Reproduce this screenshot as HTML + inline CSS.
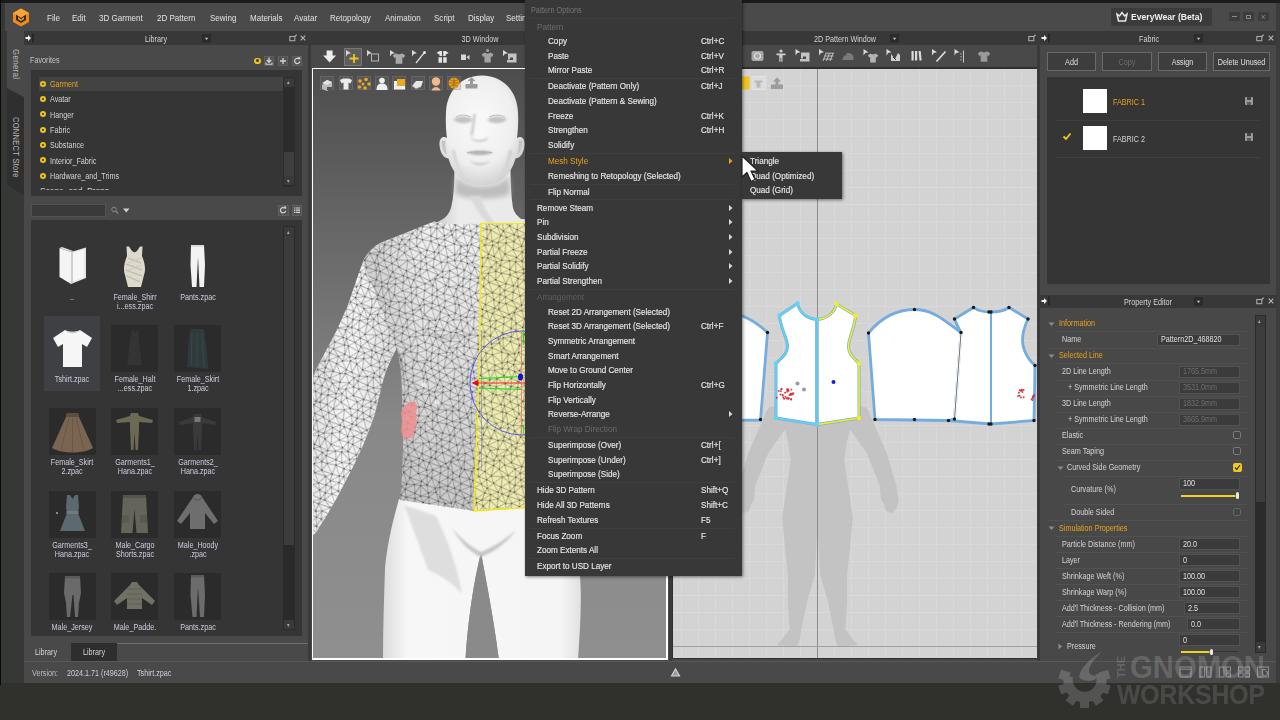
<!DOCTYPE html>
<html lang="en"><head><meta charset="utf-8"><title>Garment UI</title>
<style>
html,body{margin:0;padding:0;width:1280px;height:720px;overflow:hidden;background:#30302d;font-family:"Liberation Sans",sans-serif;font-size:8.4px;color:#d4d4d4}
div,span{position:absolute;box-sizing:border-box}
.t{white-space:nowrap;line-height:10px;height:10px}
.c{text-align:center}
.o{color:#e9a21d}
.g{color:#7a7a7a}
.hd{background:#383838;height:14px}
.pn{background:#494949}
.bx{background:#353535}
.in{background:#3b3b3b;border:1px solid #525252;height:12px}
.sep{height:1px;background:#474747}
.btn{border:1px solid #6a6a6a;background:#3d3d3d;height:19px;line-height:17px;text-align:center}
.th{width:47px;height:47px;background:#2c2c2c}
.cb{width:8px;height:8px;border:1px solid #7a7a7a;border-radius:2px;background:#444}
svg{position:absolute;overflow:hidden}
</style></head>
<body>

<div style="left:0px;top:0px;width:1280px;height:3px;background:#1b1b1b;"></div>
<div style="left:1px;top:3px;width:23px;height:680px;background:#363836;"></div>
<div style="left:0px;top:0px;width:1px;height:685px;background:#0a0a0a;"></div>
<div style="left:5px;top:3px;width:1275px;height:28px;background:#4a4a4a;"></div>
<div style="left:1276px;top:3px;width:4px;height:680px;background:#3c3c3c;"></div>
<svg style="left:12px;top:8px" width="18" height="19" viewBox="0 0 18 19"><polygon points="9,0.5 17,5 17,14 9,18.5 1,14 1,5" fill="#f08a1c"/><polygon points="9,0.5 17,5 9,9.5 1,5" fill="#f8a63a"/><polygon points="4,6.5 9,10 14,6.5 14,12 9,15 4,12" fill="#3a2a18"/><polygon points="6,9 9,11.5 12,9 12,11 9,13 6,11" fill="#f8a63a"/></svg>
<span class="t " style="left:47px;top:12.5px;transform:scaleX(0.96);transform-origin:0 50%;color:#e2e2e2">File</span>
<span class="t " style="left:72px;top:12.5px;transform:scaleX(0.96);transform-origin:0 50%;color:#e2e2e2">Edit</span>
<span class="t " style="left:99px;top:12.5px;transform:scaleX(0.96);transform-origin:0 50%;color:#e2e2e2">3D Garment</span>
<span class="t " style="left:157px;top:12.5px;transform:scaleX(0.96);transform-origin:0 50%;color:#e2e2e2">2D Pattern</span>
<span class="t " style="left:210px;top:12.5px;transform:scaleX(0.96);transform-origin:0 50%;color:#e2e2e2">Sewing</span>
<span class="t " style="left:250px;top:12.5px;transform:scaleX(0.96);transform-origin:0 50%;color:#e2e2e2">Materials</span>
<span class="t " style="left:294px;top:12.5px;transform:scaleX(0.96);transform-origin:0 50%;color:#e2e2e2">Avatar</span>
<span class="t " style="left:330px;top:12.5px;transform:scaleX(0.96);transform-origin:0 50%;color:#e2e2e2">Retopology</span>
<span class="t " style="left:385px;top:12.5px;transform:scaleX(0.96);transform-origin:0 50%;color:#e2e2e2">Animation</span>
<span class="t " style="left:434px;top:12.5px;transform:scaleX(0.96);transform-origin:0 50%;color:#e2e2e2">Script</span>
<span class="t " style="left:468px;top:12.5px;transform:scaleX(0.96);transform-origin:0 50%;color:#e2e2e2">Display</span>
<span class="t " style="left:506px;top:12.5px;transform:scaleX(0.96);transform-origin:0 50%;color:#e2e2e2">Settings</span>
<div style="left:1111px;top:8px;width:101px;height:18px;background:#3b3b3b;border-radius:2px"></div>
<svg style="left:1116px;top:11px" width="12" height="12" viewBox="0 0 12 12"><path d="M1 3 L3.5 5 L6 1.5 L8.5 5 L11 3 L9.5 10 L2.5 10 Z" fill="none" stroke="#e8e8e8" stroke-width="1.5"/></svg>
<span class="t " style="left:1130.5px;top:12.0px;transform:scaleX(0.9);transform-origin:0 50%;font-weight:bold;font-size:9.6px;color:#f0f0f0">EveryWear (Beta)</span>
<div style="left:1229px;top:12px;width:11px;height:9px;background:#3c3c3c;border-radius:1px"></div>
<div style="left:1243px;top:12px;width:11px;height:9px;background:#3c3c3c;border-radius:1px"></div>
<div style="left:1258px;top:12px;width:11px;height:9px;background:#3c3c3c;border-radius:1px"></div>
<div style="left:1232px;top:16px;width:5px;height:1px;background:#8a8a8a;"></div>
<div style="left:1246px;top:15px;width:5px;height:4px;border:1px solid #8a8a8a"></div>
<span class="t " style="left:1261px;top:11.5px;transform:scaleX(0.86);transform-origin:0 50%;color:#8a8a8a;font-size:9px">×</span>
<div style="left:7px;top:31px;width:17px;height:66px;background:#494949;clip-path:polygon(0 0,100% 0,100% 100%,0 86%)"></div>
<div style="left:7px;top:89px;width:17px;height:106px;background:#2f2f2f;clip-path:polygon(0 0,100% 8%,100% 100%,0 90.500%)"></div>
<span class="t" style="left:11px;top:49px;transform-origin:0 0;transform:translate(10px,0) rotate(90deg) scaleX(.95);color:#b8b8b8;letter-spacing:.3px">General</span>
<span class="t" style="left:11px;top:116.5px;transform-origin:0 0;transform:translate(10px,0) rotate(90deg) scaleX(.9);color:#b8b8b8;letter-spacing:.3px">CONNECT Store</span>
<div style="left:24px;top:31px;width:284px;height:630px;background:#494949;"></div>
<div style="left:24px;top:31px;width:284px;height:14px;background:#383838;"></div>
<span class="t c " style="left:96.0px;width:120px;top:33.5px;transform:scaleX(0.86);">Library</span>
<svg style="left:201.5px;top:34.0px" width="9" height="9" viewBox="0 0 9 9"><rect width="9" height="9" rx="1" fill="#2b2b2b"/><path d="M2.800 3.700 h3.400 l-1.700 2.200 z" fill="#c8c8c8"/></svg>
<svg style="left:25px;top:32.5px" width="10" height="10" viewBox="0 0 10 10"><path d="M0.500 4 h2.500 v-2 l3 3 l-3 3 v-2 h-2.500 z" fill="#f2f2f2"/><rect x="7.200" y="0.500" width="1.500" height="9" fill="#242424"/></svg>
<svg style="left:289px;top:33.5px" width="9" height="8" viewBox="0 0 9 8"><rect x="0.800" y="2.500" width="5" height="4.200" fill="none" stroke="#aaaaaa" stroke-width="1.100"/><path d="M5.500 2.800 L7.800 .6" stroke="#aaaaaa" stroke-width="1.200"/></svg>
<svg style="left:300px;top:34.5px" width="6" height="6" viewBox="0 0 6 6"><path d="M.7 .7 L5.300 5.300 M5.300 .7 L.7 5.300" stroke="#b4b4b4" stroke-width="1.200"/></svg>
<span class="t " style="left:30px;top:54.5px;transform:scaleX(0.86);transform-origin:0 50%;color:#c4c4c4">Favorites</span>
<div style="left:254px;top:57.500px;width:6.500px;height:6.500px;border-radius:4px;background:#ecc81c"></div><div style="left:255.800px;top:59.300px;width:3px;height:3px;border-radius:2px;background:#4a3018"></div>
<div style="left:264px;top:55.5px;width:10px;height:10px;background:#535353;border:1px solid #5e5e5e"></div>
<div style="left:278px;top:55.5px;width:10px;height:10px;background:#535353;border:1px solid #5e5e5e"></div>
<div style="left:292px;top:55.5px;width:10px;height:10px;background:#535353;border:1px solid #5e5e5e"></div>
<svg style="left:264px;top:55.500px" width="40" height="10" viewBox="0 0 40 10" fill="none" stroke="#d4d4d4"><path d="M5 1.500 v4.500 M2.800 4 l2.200 2.400 l2.200 -2.400" stroke-width="1.300"/><path d="M2 6.500 v1.800 h6 v-1.800" stroke-width="1.100"/><path d="M19 2 v6 M16 5 h6" stroke-width="1.300"/><path d="M35 3 a2.600 2.600 0 1 0 .8 2.500" stroke-width="1.200"/><path d="M33.500 1.200 h2.800 v2.800 z" fill="#d4d4d4" stroke="none"/></svg>
<div style="left:31px;top:70px;width:271px;height:126px;background:#353535;"></div>
<div style="left:39px;top:77px;width:244px;height:14px;background:#434343;"></div>
<div style="left:40px;top:80.5px;width:6px;height:6px;border-radius:3px;background:#ecc41c"></div><div style="left:42px;top:82.5px;width:2px;height:2px;border-radius:1px;background:#3a3010"></div>
<span class="t o" style="left:49.5px;top:79.0px;transform:scaleX(0.86);transform-origin:0 50%;">Garment</span>
<div style="left:40px;top:95.8px;width:6px;height:6px;border-radius:3px;background:#ecc41c"></div><div style="left:42px;top:97.8px;width:2px;height:2px;border-radius:1px;background:#3a3010"></div>
<span class="t " style="left:49.5px;top:94.3px;transform:scaleX(0.86);transform-origin:0 50%;">Avatar</span>
<div style="left:40px;top:111.2px;width:6px;height:6px;border-radius:3px;background:#ecc41c"></div><div style="left:42px;top:113.2px;width:2px;height:2px;border-radius:1px;background:#3a3010"></div>
<span class="t " style="left:49.5px;top:109.7px;transform:scaleX(0.86);transform-origin:0 50%;">Hanger</span>
<div style="left:40px;top:126.6px;width:6px;height:6px;border-radius:3px;background:#ecc41c"></div><div style="left:42px;top:128.6px;width:2px;height:2px;border-radius:1px;background:#3a3010"></div>
<span class="t " style="left:49.5px;top:125.1px;transform:scaleX(0.86);transform-origin:0 50%;">Fabric</span>
<div style="left:40px;top:141.9px;width:6px;height:6px;border-radius:3px;background:#ecc41c"></div><div style="left:42px;top:143.9px;width:2px;height:2px;border-radius:1px;background:#3a3010"></div>
<span class="t " style="left:49.5px;top:140.4px;transform:scaleX(0.86);transform-origin:0 50%;">Substance</span>
<div style="left:40px;top:157.2px;width:6px;height:6px;border-radius:3px;background:#ecc41c"></div><div style="left:42px;top:159.2px;width:2px;height:2px;border-radius:1px;background:#3a3010"></div>
<span class="t " style="left:49.5px;top:155.8px;transform:scaleX(0.86);transform-origin:0 50%;">Interior_Fabric</span>
<div style="left:40px;top:172.6px;width:6px;height:6px;border-radius:3px;background:#ecc41c"></div><div style="left:42px;top:174.6px;width:2px;height:2px;border-radius:1px;background:#3a3010"></div>
<span class="t " style="left:49.5px;top:171.1px;transform:scaleX(0.86);transform-origin:0 50%;">Hardware_and_Trims</span>
<div style="left:40px;top:186px;width:80px;height:4px;overflow:hidden"><span class="t" style="left:0;top:0px">Scene_and_Props</span></div>
<div style="left:283px;top:77px;width:12px;height:110px;background:#2c2c2c;"></div>
<div style="left:284px;top:78px;width:10px;height:9px;background:#3a3a3a;"></div>
<div style="left:284px;top:176px;width:10px;height:9px;background:#3a3a3a;"></div>
<div style="left:284px;top:152px;width:10px;height:24px;background:#3e3e3e;"></div>
<span class="t " style="left:286.5px;top:77.0px;transform:scaleX(0.86);transform-origin:0 50%;font-size:6px;color:#aaa">▴</span>
<span class="t " style="left:286.5px;top:176.0px;transform:scaleX(0.86);transform-origin:0 50%;font-size:6px;color:#aaa">▾</span>
<div style="left:31px;top:204px;width:75px;height:13px;background:#3a3a3a;border:1px solid #525252"></div>
<svg style="left:110px;top:205px" width="22" height="11" viewBox="0 0 22 11"><circle cx="4" cy="4.500" r="2.300" fill="none" stroke="#8a8a8a" stroke-width="1"/><path d="M5.800 6.300 L8 8.500" stroke="#8a8a8a" stroke-width="1.200"/><path d="M13 3.500 h6.500 l-3.250 4 z" fill="#d0d0d0"/></svg>
<div style="left:278px;top:205px;width:10.5px;height:10.5px;background:#535353;border:1px solid #5e5e5e"></div>
<div style="left:291.5px;top:205px;width:10.5px;height:10.5px;background:#535353;border:1px solid #5e5e5e"></div>
<svg style="left:278px;top:205px" width="25" height="11" viewBox="0 0 25 11" fill="none" stroke="#d4d4d4"><path d="M6.800 3.300 a2.600 2.600 0 1 0 .8 2.500" stroke-width="1.200"/><path d="M5.300 1.500 h2.800 v2.800 z" fill="#d4d4d4" stroke="none"/><path d="M16 3 h6 M16 5.200 h6 M16 7.400 h6" stroke-width="1.200" stroke-dasharray="1.200 .6 6 0"/></svg>
<div style="left:31px;top:220px;width:271px;height:416px;background:#353535;"></div>
<div style="left:283px;top:226px;width:12px;height:404px;background:#2a2a2a;"></div>
<div style="left:284px;top:227px;width:10px;height:10px;background:#3a3a3a;"></div>
<div style="left:284px;top:237px;width:10px;height:308px;background:#3c3c3c;"></div>
<div style="left:284px;top:620px;width:10px;height:9px;background:#3a3a3a;"></div>
<span class="t " style="left:286.5px;top:227.0px;transform:scaleX(0.86);transform-origin:0 50%;font-size:6px;color:#aaa">▴</span>
<span class="t " style="left:286.5px;top:620.0px;transform:scaleX(0.86);transform-origin:0 50%;font-size:6px;color:#aaa">▾</span>
<div style="left:44px;top:316px;width:56px;height:75px;background:#3e4043;"></div>
<span class="t c " style="left:37.0px;width:70px;top:291.5px;transform:scaleX(0.86);color:#cdcde0">..</span>
<span class="t c " style="left:99.5px;width:70px;top:291.5px;transform:scaleX(0.86);color:#cdcde0">Female_Shirr</span>
<span class="t c " style="left:99.5px;width:70px;top:300.7px;transform:scaleX(0.86);color:#cdcde0">i...ess.zpac</span>
<span class="t c " style="left:162.5px;width:70px;top:291.5px;transform:scaleX(0.86);color:#cdcde0">Pants.zpac</span>
<span class="t c " style="left:37.0px;width:70px;top:374.0px;transform:scaleX(0.86);color:#cdcde0">Tshirt.zpac</span>
<div style="left:111.0px;top:325px;width:47px;height:47px;background:#2b2b2b;"></div>
<span class="t c " style="left:99.5px;width:70px;top:374.0px;transform:scaleX(0.86);color:#cdcde0">Female_Halt</span>
<span class="t c " style="left:99.5px;width:70px;top:383.2px;transform:scaleX(0.86);color:#cdcde0">...ess.zpac</span>
<div style="left:174.0px;top:325px;width:47px;height:47px;background:#2b2b2b;"></div>
<span class="t c " style="left:162.5px;width:70px;top:374.0px;transform:scaleX(0.86);color:#cdcde0">Female_Skirt</span>
<span class="t c " style="left:162.5px;width:70px;top:383.2px;transform:scaleX(0.86);color:#cdcde0">1.zpac</span>
<div style="left:48.5px;top:407.5px;width:47px;height:47px;background:#2b2b2b;"></div>
<span class="t c " style="left:37.0px;width:70px;top:456.5px;transform:scaleX(0.86);color:#cdcde0">Female_Skirt</span>
<span class="t c " style="left:37.0px;width:70px;top:465.7px;transform:scaleX(0.86);color:#cdcde0">2.zpac</span>
<div style="left:111.0px;top:407.5px;width:47px;height:47px;background:#2b2b2b;"></div>
<span class="t c " style="left:99.5px;width:70px;top:456.5px;transform:scaleX(0.86);color:#cdcde0">Garments1_</span>
<span class="t c " style="left:99.5px;width:70px;top:465.7px;transform:scaleX(0.86);color:#cdcde0">Hana.zpac</span>
<div style="left:174.0px;top:407.5px;width:47px;height:47px;background:#2b2b2b;"></div>
<span class="t c " style="left:162.5px;width:70px;top:456.5px;transform:scaleX(0.86);color:#cdcde0">Garments2_</span>
<span class="t c " style="left:162.5px;width:70px;top:465.7px;transform:scaleX(0.86);color:#cdcde0">Hana.zpac</span>
<div style="left:48.5px;top:490.5px;width:47px;height:47px;background:#2b2b2b;"></div>
<span class="t c " style="left:37.0px;width:70px;top:539.5px;transform:scaleX(0.86);color:#cdcde0">Garments3_</span>
<span class="t c " style="left:37.0px;width:70px;top:548.7px;transform:scaleX(0.86);color:#cdcde0">Hana.zpac</span>
<div style="left:111.0px;top:490.5px;width:47px;height:47px;background:#2b2b2b;"></div>
<span class="t c " style="left:99.5px;width:70px;top:539.5px;transform:scaleX(0.86);color:#cdcde0">Male_Cargo</span>
<span class="t c " style="left:99.5px;width:70px;top:548.7px;transform:scaleX(0.86);color:#cdcde0">Shorts.zpac</span>
<div style="left:174.0px;top:490.5px;width:47px;height:47px;background:#2b2b2b;"></div>
<span class="t c " style="left:162.5px;width:70px;top:539.5px;transform:scaleX(0.86);color:#cdcde0">Male_Hoody</span>
<span class="t c " style="left:162.5px;width:70px;top:548.7px;transform:scaleX(0.86);color:#cdcde0">.zpac</span>
<div style="left:48.5px;top:573px;width:47px;height:47px;background:#2b2b2b;"></div>
<span class="t c " style="left:37.0px;width:70px;top:622.0px;transform:scaleX(0.86);color:#cdcde0">Male_Jersey</span>
<div style="left:111.0px;top:573px;width:47px;height:47px;background:#2b2b2b;"></div>
<span class="t c " style="left:99.5px;width:70px;top:622.0px;transform:scaleX(0.86);color:#cdcde0">Male_Padde.</span>
<div style="left:174.0px;top:573px;width:47px;height:47px;background:#2b2b2b;"></div>
<span class="t c " style="left:162.5px;width:70px;top:622.0px;transform:scaleX(0.86);color:#cdcde0">Pants.zpac</span>
<svg style="left:48.5px;top:242.5px" width="47" height="47" viewBox="0 0 47 47"><path d="M10.500 5 L22 9 L22 41 L10.500 34 Z" fill="#f4f4f4"/><path d="M22 9 L37 4.500 L37 35 L22 41 Z" fill="#e6e6e6"/><path d="M24 10 L35 6.500 L35 34 L24 38.500 Z" fill="#f7f7f7"/><path d="M22 9 L24 8 L24 39 L22 41Z" fill="#cfcfcf"/><path d="M10.500 5 L13 4 L24 8 L22 9Z" fill="#dcdcdc"/></svg>
<svg style="left:111.0px;top:242.5px" width="47" height="47" viewBox="0 0 47 47"><path d="M15.500 3.500 L18 3.500 L21 8 L23.500 9.500 L26 8 L29 3.500 L31.500 3.500 L31 13 C34 20 35 27 33 32 L30 44 L17 44 L14 32 C12 27 13 20 16 13 Z" fill="#ddd9cc"/><path d="M17 15 L30 20 M15 21 L31 27 M14.500 27 L31 33 M16 33 L29 39" stroke="#bdb8a8" stroke-width="1.100"/><path d="M30 15 L17 20 M31 22 L16 28" stroke="#c9c4b5" stroke-width=".8"/></svg>
<svg style="left:174.0px;top:242.5px" width="47" height="47" viewBox="0 0 47 47"><path d="M17 2 H30 L31 22 L30 44 H25.500 L24 14 L22.500 44 H18 L16.500 22 Z" fill="#f3f3f3"/><path d="M17 2 H30 V4 H17Z" fill="#dcdcdc"/></svg>
<svg style="left:48.5px;top:325px" width="47" height="47" viewBox="0 0 47 47"><path d="M16 5 C20 8 27 8 31 5 L43 13 L38 22 L33 19 L33 42 L14 42 L14 19 L9 22 L4 13 Z" fill="#f6f6f6"/><path d="M16 5 C20 9.500 27 9.500 31 5 C27 7 20 7 16 5Z" fill="#cfcfcf"/></svg>
<svg style="left:111.0px;top:325px" width="47" height="47" viewBox="0 0 47 47"><path d="M21 5 L23 5 L23.500 9 L26 5 L27 5 L28 16 L31 40 L16 40 L19 16 Z" fill="#343434"/></svg>
<svg style="left:174.0px;top:325px" width="47" height="47" viewBox="0 0 47 47"><path d="M16 4 H30 L33 28 L34 44 L13 42 L14 26 Z" fill="#2f3a3c"/><path d="M18 8 L17 40 M23 8 L23 42 M28 8 L30 42" stroke="#3b4749" stroke-width="1"/></svg>
<svg style="left:48.5px;top:407.5px" width="47" height="47" viewBox="0 0 47 47"><path d="M18 5 H29 L30 9 L44 40 C34 46 13 46 3 40 L17 9 Z" fill="#7a6552"/><path d="M18 5 H29 L30 9 H17Z" fill="#5e4d3e"/><path d="M20 10 L12 42 M27 10 L35 42 M23.500 10 L23.500 44" stroke="#6a5746" stroke-width="1"/></svg>
<svg style="left:111.0px;top:407.5px" width="47" height="47" viewBox="0 0 47 47"><path d="M20 5 H27 L28 8 L42 12 L41 15 L28 14 L28 20 L27 42 H24.500 L23.500 24 L22.500 42 H20 L19 20 L19 14 L6 15 L5 12 L19 8 Z" fill="#6c6a55"/></svg>
<svg style="left:174.0px;top:407.5px" width="47" height="47" viewBox="0 0 47 47"><path d="M20 6 H27 L28 9 L42 14 L41 17 L28 15 L28 22 L27 42 H24.500 L23.500 25 L22.500 42 H20 L19 22 L19 15 L6 17 L5 14 L19 9 Z" fill="#3a3a3c"/><rect x="20.500" y="9" width="6" height="5" fill="#777"/></svg>
<svg style="left:48.5px;top:490.5px" width="47" height="47" viewBox="0 0 47 47"><path d="M18 4 L21 4 L23.500 8 L26 4 L29 4 L30 16 L29 22 L36 40 L11 40 L18 22 L17 16 Z" fill="#5a6a70"/><path d="M17.500 20 H29.500 V23 H17.500Z" fill="#6e7c80"/><circle cx="8" cy="22" r="1" fill="#aaa"/></svg>
<svg style="left:111.0px;top:490.5px" width="47" height="47" viewBox="0 0 47 47"><path d="M12 4 H35 L37 42 H25.500 L23.500 18 L21.500 42 H10 Z" fill="#64645a"/><path d="M12 4 H35 V7 H12Z" fill="#55554c"/><path d="M11 24 H18 V32 H11Z M29 24 H36 V32 H29Z" fill="#5a5a50"/></svg>
<svg style="left:174.0px;top:490.5px" width="47" height="47" viewBox="0 0 47 47"><path d="M19 6 C20 2 27 2 28 6 L32 12 L44 30 L40 33 L31 22 L31 38 H16 L16 22 L7 33 L3 30 L15 12 Z" fill="#6e6e6e"/><path d="M19 6 C21 10 26 10 28 6" stroke="#555" fill="none"/></svg>
<svg style="left:48.5px;top:573px" width="47" height="47" viewBox="0 0 47 47"><path d="M16 3 H31 L32 20 L30 30 L29 44 H26 L24.500 22 L23.500 22 L21 44 H18 L17 30 L15 20 Z" fill="#6a6a6a"/><path d="M16 3 H31 V5.500 H16Z" fill="#5a5a5a"/></svg>
<svg style="left:111.0px;top:573px" width="47" height="47" viewBox="0 0 47 47"><path d="M19 12 L21 9 H26 L28 12 L44 28 L41 32 L31 25 L31 36 H16 L16 25 L6 32 L3 28 Z" fill="#707064"/><path d="M16 16 H31 M16 21 H31 M16 26 H31 M16 31 H31" stroke="#5c5c52" stroke-width=".8"/></svg>
<svg style="left:174.0px;top:573px" width="47" height="47" viewBox="0 0 47 47"><path d="M17 2 H30 L31 22 L30 44 H26 L24 14 L22.500 44 H18.500 L16.500 22 Z" fill="#6c6c6c"/><path d="M17 2 H30 V4.500 H17Z" fill="#5a5a5a"/></svg>
<div style="left:117px;top:643px;width:191px;height:1px;background:#6e6e6e;"></div>
<div style="left:71px;top:643px;width:46px;height:18px;background:#2e2e2e;"></div>
<span class="t c " style="left:23.0px;width:46px;top:646.5px;transform:scaleX(0.86);">Library</span>
<span class="t c " style="left:70.5px;width:46px;top:646.5px;transform:scaleX(0.86);">Library</span>
<div style="left:24px;top:661px;width:1252px;height:22px;background:#494949;"></div>
<div style="left:24px;top:661px;width:1252px;height:1px;background:#585858;"></div>
<span class="t " style="left:31.5px;top:667.5px;transform:scaleX(0.86);transform-origin:0 50%;color:#bdbdbd">Version:</span>
<span class="t " style="left:66.5px;top:667.5px;transform:scaleX(0.86);transform-origin:0 50%;color:#cfcfd4">2024.1.71 (r49628)</span>
<span class="t " style="left:136.5px;top:667.5px;transform:scaleX(0.86);transform-origin:0 50%;color:#cfcfd4">Tshirt.zpac</span>
<svg style="left:670px;top:667px" width="12" height="11" viewBox="0 0 12 11"><path d="M1.500 9 L5.500 2 L9.500 9 Z" fill="#9a9a9a" stroke="#d0d0d0" stroke-width="1.200"/></svg>
<div style="left:308px;top:31px;width:3px;height:630px;background:#3a3a3a;"></div>
<div style="left:311px;top:31px;width:358px;height:630px;background:#484848;"></div>
<div style="left:311px;top:31px;width:358px;height:14px;background:#383838;"></div>
<span class="t c " style="left:420.0px;width:120px;top:33.5px;transform:scaleX(0.86);">3D Window</span>
<div style="left:669px;top:31px;width:3px;height:630px;background:#3a3a3a;"></div>
<div style="left:311px;top:45px;width:358px;height:22.500px;background:#494949"></div>
<div style="left:343.500px;top:47.500px;width:18px;height:18px;background:#5d5d5d;border:1px solid #787878"></div>
<svg style="left:311px;top:45px" width="215" height="23" viewBox="311 45 215 23">
<path d="M326.600 50.5 h6 v5 h3.500 l-6.500 7 l-6.500 -7 h3.500 z" fill="#ededed"/>
<path d="M346 50 l5 3.200 l-3.200 .8 l-1.800 2.600 z" fill="#d8d8d8"/><path d="M349.500 58.5 h9 M354 54 v9" stroke="#f0c81e" stroke-width="1.800"/>
<path d="M367 50 l5 3.200 l-3.200 .8 l-1.800 2.600 z" fill="#d8d8d8"/><rect x="371.500" y="54" width="7" height="7" fill="none" stroke="#b8b8b8" stroke-width="1"/>
<path d="M390 50 l5 3.200 l-3.200 .8 l-1.800 2.600 z" fill="#d8d8d8"/><path transform="translate(399,58.5) scale(0.95)" d="M-3 -5.500 L-6.500 -3.500 L-5 -.5 L-3.500 -1.200 L-3.500 5.500 L3.500 5.500 L3.500 -1.200 L5 -.5 L6.500 -3.500 L3 -5.500 C2 -4 -2 -4 -3 -5.500 Z" fill="#a9a9a9"/>
<path d="M412 50 l5 3.200 l-3.200 .8 l-1.800 2.600 z" fill="#d8d8d8"/><path d="M416 63 L424 53" stroke="#d8d8d8" stroke-width="1.300"/><circle cx="424.500" cy="52.5" r="1.500" fill="#e8e8e8"/>
<path d="M436.500 53 l3 -2 h2.500 v5 h-2.500 v-1.500 z M448.700 53 l-3 -2 h-2.500 v5 h2.500 v-1.500 z M438.500 57.2 h3.500 v5.500 h-3.500 z M443.200 57.2 h3.500 v5.500 h-3.500 z" fill="#e4e4e4"/>
<path d="M461 54.5 h5 v5.500 h-5 z M466.500 57.2 l3 -2.500 v5 z" fill="#d8d8d8"/>
<path transform="translate(487.6,57.5) scale(0.9)" d="M-3 -5.500 L-6.500 -3.500 L-5 -.5 L-3.500 -1.200 L-3.500 5.500 L3.500 5.500 L3.500 -1.200 L5 -.5 L6.500 -3.500 L3 -5.500 C2 -4 -2 -4 -3 -5.500 Z" fill="#a4a4a4"/><circle cx="487.600" cy="50.5" r="1.500" fill="#a4a4a4"/>
<path d="M503 50 l5 3.200 l-3.200 .8 l-1.800 2.600 z" fill="#d8d8d8"/><path d="M508 53.5 h8.500 v9 h-9.500 v-2.500 h6 v-2.500 h-3 v2 h-2 z" fill="#c4c4c4"/>
</svg>
<div style="left:311.500px;top:67.500px;width:356.500px;height:592.500px;background:#ffffff"></div>
<svg style="left:313px;top:69px" width="353" height="589" viewBox="313 69 353 589">
<defs>
<pattern id="mesh" width="85.80" height="81.06" patternUnits="userSpaceOnUse" patternTransform="rotate(23)"><path d="M-1.3 -3.7L0.8 1.3M-4.3 0.8L0.8 1.3M-5.1 5.7L7.1 7.6M-5.1 5.7L1.0 14.9M-4.9 12.5L1.0 14.9M-1.8 21.6L3.3 21.3M-1.8 21.6L1.7 29.3M-7.8 29.3L1.7 29.3M-5.4 33.2L2.8 33.9M-1.2 47.1L5.9 46.2M-1.2 47.1L3.5 57.1M-8.6 53.0L3.5 57.1M-2.2 61.6L5.7 62.3M-2.2 61.6L-0.8 66.4M-6.1 69.2L-0.8 66.4M-1.3 77.3L5.0 73.3M5.0 -7.7L0.8 1.3M5.0 -7.7L7.2 -0.2M0.8 1.3L7.2 -0.2M0.8 1.3L-5.1 5.7M0.8 1.3L7.1 7.6M7.1 7.6L10.3 7.6M7.1 7.6L1.0 14.9M7.1 7.6L8.5 16.0M1.0 14.9L8.5 16.0M1.0 14.9L-1.8 21.6M1.0 14.9L3.3 21.3M3.3 21.3L12.8 21.9M3.3 21.3L1.7 29.3M3.3 21.3L8.8 28.7M1.7 29.3L8.8 28.7M1.7 29.3L-5.4 33.2M1.7 29.3L2.8 33.9M2.8 33.9L12.5 33.8M2.8 33.9L-1.1 42.9M2.8 33.9L11.4 43.7M-1.1 42.9L11.4 43.7M-1.1 42.9L5.9 46.2M5.9 46.2L14.5 49.2M5.9 46.2L3.5 57.1M5.9 46.2L7.8 53.8M3.5 57.1L7.8 53.8M3.5 57.1L-2.2 61.6M3.5 57.1L5.7 62.3M5.7 62.3L11.6 59.9M5.7 62.3L-0.8 66.4M5.7 62.3L10.2 68.1M-0.8 66.4L10.2 68.1M-0.8 66.4L-1.3 77.3M-0.8 66.4L5.0 73.3M5.0 73.3L14.5 74.8M5.0 73.3L0.8 82.3M5.0 73.3L7.2 80.9M0.8 82.3L7.2 80.9M14.5 -6.3L7.2 -0.2M14.5 -6.3L19.0 2.5M7.2 -0.2L19.0 2.5M7.2 -0.2L7.1 7.6M7.2 -0.2L10.3 7.6M10.3 7.6L17.9 6.5M10.3 7.6L8.5 16.0M10.3 7.6L18.7 14.4M8.5 16.0L18.7 14.4M8.5 16.0L3.3 21.3M8.5 16.0L12.8 21.9M12.8 21.9L23.0 20.8M12.8 21.9L8.8 28.7M12.8 21.9L14.4 28.6M8.8 28.7L14.4 28.6M8.8 28.7L2.8 33.9M8.8 28.7L12.5 33.8M12.5 33.8L21.9 33.7M12.5 33.8L11.4 43.7M12.5 33.8L14.5 40.8M11.4 43.7L14.5 40.8M11.4 43.7L5.9 46.2M11.4 43.7L14.5 49.2M14.5 49.2L22.9 49.4M14.5 49.2L7.8 53.8M14.5 49.2L14.6 53.9M7.8 53.8L14.6 53.9M7.8 53.8L5.7 62.3M7.8 53.8L11.6 59.9M11.6 59.9L18.4 59.8M11.6 59.9L10.2 68.1M11.6 59.9L18.1 67.1M10.2 68.1L18.1 67.1M10.2 68.1L5.0 73.3M10.2 68.1L14.5 74.8M14.5 74.8L20.8 75.1M14.5 74.8L7.2 80.9M14.5 74.8L19.0 83.6M7.2 80.9L19.0 83.6M7.2 80.9L7.1 88.7M7.2 80.9L10.3 88.7M20.8 -6.0L19.0 2.5M20.8 -6.0L22.8 2.0M19.0 2.5L22.8 2.0M19.0 2.5L10.3 7.6M19.0 2.5L17.9 6.5M17.9 6.5L26.4 8.4M17.9 6.5L18.7 14.4M17.9 6.5L22.4 14.2M18.7 14.4L22.4 14.2M18.7 14.4L12.8 21.9M18.7 14.4L23.0 20.8M23.0 20.8L26.8 20.2M23.0 20.8L14.4 28.6M23.0 20.8L26.8 29.4M14.4 28.6L26.8 29.4M14.4 28.6L12.5 33.8M14.4 28.6L21.9 33.7M21.9 33.7L27.3 36.5M21.9 33.7L14.5 40.8M21.9 33.7L22.9 41.1M14.5 40.8L22.9 41.1M14.5 40.8L14.5 49.2M14.5 40.8L22.9 49.4M22.9 49.4L30.1 48.9M22.9 49.4L14.6 53.9M22.9 49.4L22.3 57.2M14.6 53.9L22.3 57.2M14.6 53.9L11.6 59.9M14.6 53.9L18.4 59.8M18.4 59.8L26.8 60.7M18.4 59.8L18.1 67.1M18.4 59.8L25.8 67.8M18.1 67.1L25.8 67.8M18.1 67.1L14.5 74.8M18.1 67.1L20.8 75.1M20.8 75.1L27.3 73.4M20.8 75.1L19.0 83.6M20.8 75.1L22.8 83.1M27.3 -7.7L22.8 2.0M27.3 -7.7L30.1 1.4M22.8 2.0L30.1 1.4M22.8 2.0L17.9 6.5M22.8 2.0L26.4 8.4M26.4 8.4L34.8 8.2M26.4 8.4L22.4 14.2M26.4 8.4L31.5 14.3M22.4 14.2L31.5 14.3M22.4 14.2L23.0 20.8M22.4 14.2L26.8 20.2M26.8 20.2L38.5 21.2M26.8 20.2L26.8 29.4M26.8 20.2L32.6 29.7M26.8 29.4L32.6 29.7M26.8 29.4L21.9 33.7M26.8 29.4L27.3 36.5M27.3 36.5L34.5 33.2M27.3 36.5L22.9 41.1M27.3 36.5L34.3 42.9M22.9 41.1L34.3 42.9M22.9 41.1L22.9 49.4M22.9 41.1L30.1 48.9M30.1 48.9L34.8 46.9M30.1 48.9L22.3 57.2M30.1 48.9L33.4 57.0M22.3 57.2L33.4 57.0M22.3 57.2L18.4 59.8M22.3 57.2L26.8 60.7M26.8 60.7L34.5 63.8M26.8 60.7L25.8 67.8M26.8 60.7L34.2 69.0M25.8 67.8L34.2 69.0M25.8 67.8L20.8 75.1M25.8 67.8L27.3 73.4M27.3 73.4L35.7 73.5M27.3 73.4L22.8 83.1M27.3 73.4L30.1 82.4M35.7 -7.5L30.1 1.4M35.7 -7.5L37.6 3.1M30.1 1.4L37.6 3.1M30.1 1.4L26.4 8.4M30.1 1.4L34.8 8.2M34.8 8.2L42.6 8.7M34.8 8.2L31.5 14.3M34.8 8.2L38.7 16.0M31.5 14.3L38.7 16.0M31.5 14.3L26.8 20.2M31.5 14.3L38.5 21.2M38.5 21.2L44.4 20.3M38.5 21.2L32.6 29.7M38.5 21.2L38.3 29.0M32.6 29.7L38.3 29.0M32.6 29.7L27.3 36.5M32.6 29.7L34.5 33.2M34.5 33.2L41.7 33.6M34.5 33.2L34.3 42.9M34.5 33.2L40.3 43.1M34.3 42.9L40.3 43.1M34.3 42.9L30.1 48.9M34.3 42.9L34.8 46.9M34.8 46.9L44.5 47.3M34.8 46.9L33.4 57.0M34.8 46.9L42.1 53.7M33.4 57.0L42.1 53.7M33.4 57.0L26.8 60.7M33.4 57.0L34.5 63.8M34.5 63.8L41.4 60.8M34.5 63.8L34.2 69.0M34.5 63.8L39.7 66.6M34.2 69.0L39.7 66.6M34.2 69.0L27.3 73.4M34.2 69.0L35.7 73.5M35.7 73.5L42.2 74.7M35.7 73.5L30.1 82.4M35.7 73.5L37.6 84.1M42.2 -6.3L37.6 3.1M42.2 -6.3L48.2 -0.6M37.6 3.1L48.2 -0.6M37.6 3.1L34.8 8.2M37.6 3.1L42.6 8.7M42.6 8.7L51.0 9.5M42.6 8.7L38.7 16.0M42.6 8.7L50.3 15.2M38.7 16.0L50.3 15.2M38.7 16.0L38.5 21.2M38.7 16.0L44.4 20.3M44.4 20.3L52.7 21.6M44.4 20.3L38.3 29.0M44.4 20.3L45.9 25.9M38.3 29.0L45.9 25.9M38.3 29.0L34.5 33.2M38.3 29.0L41.7 33.6M41.7 33.6L49.2 36.6M41.7 33.6L40.3 43.1M41.7 33.6L48.8 43.6M40.3 43.1L48.8 43.6M40.3 43.1L34.8 46.9M40.3 43.1L44.5 47.3M44.5 47.3L49.2 48.9M44.5 47.3L42.1 53.7M44.5 47.3L47.7 56.1M42.1 53.7L47.7 56.1M42.1 53.7L34.5 63.8M42.1 53.7L41.4 60.8M41.4 60.8L50.8 64.0M41.4 60.8L39.7 66.6M41.4 60.8L45.6 68.8M39.7 66.6L45.6 68.8M39.7 66.6L35.7 73.5M39.7 66.6L42.2 74.7M42.2 74.7L52.9 77.1M42.2 74.7L37.6 84.1M42.2 74.7L48.2 80.4M37.6 84.1L48.2 80.4M52.9 -4.0L48.2 -0.6M52.9 -4.0L56.8 1.9M48.2 -0.6L56.8 1.9M48.2 -0.6L42.6 8.7M48.2 -0.6L51.0 9.5M51.0 9.5L61.0 9.6M51.0 9.5L50.3 15.2M51.0 9.5L54.8 15.3M50.3 15.2L54.8 15.3M50.3 15.2L44.4 20.3M50.3 15.2L52.7 21.6M52.7 21.6L61.6 22.9M52.7 21.6L45.9 25.9M52.7 21.6L55.2 29.3M45.9 25.9L55.2 29.3M45.9 25.9L41.7 33.6M45.9 25.9L49.2 36.6M49.2 36.6L61.4 35.1M49.2 36.6L48.8 43.6M49.2 36.6L56.2 41.0M48.8 43.6L56.2 41.0M48.8 43.6L44.5 47.3M48.8 43.6L49.2 48.9M49.2 48.9L59.9 48.8M49.2 48.9L47.7 56.1M49.2 48.9L53.4 55.7M47.7 56.1L53.4 55.7M47.7 56.1L41.4 60.8M47.7 56.1L50.8 64.0M50.8 64.0L62.0 63.5M50.8 64.0L45.6 68.8M50.8 64.0L56.8 68.1M45.6 68.8L56.8 68.1M45.6 68.8L42.2 74.7M45.6 68.8L52.9 77.1M52.9 77.1L60.7 75.7M52.9 77.1L48.2 80.4M52.9 77.1L56.8 83.0M48.2 80.4L56.8 83.0M48.2 80.4L42.6 89.7M48.2 80.4L51.0 90.6M60.7 -5.4L56.8 1.9M60.7 -5.4L63.1 2.5M56.8 1.9L63.1 2.5M56.8 1.9L51.0 9.5M56.8 1.9L61.0 9.6M61.0 9.6L65.2 8.9M61.0 9.6L54.8 15.3M61.0 9.6L61.0 15.0M54.8 15.3L61.0 15.0M54.8 15.3L52.7 21.6M54.8 15.3L61.6 22.9M61.6 22.9L67.2 20.1M61.6 22.9L55.2 29.3M61.6 22.9L64.4 28.0M55.2 29.3L64.4 28.0M55.2 29.3L49.2 36.6M55.2 29.3L61.4 35.1M61.4 35.1L67.9 36.6M61.4 35.1L56.2 41.0M61.4 35.1L62.1 39.4M56.2 41.0L62.1 39.4M56.2 41.0L49.2 48.9M56.2 41.0L59.9 48.8M59.9 48.8L66.3 49.1M59.9 48.8L53.4 55.7M59.9 48.8L61.9 53.6M53.4 55.7L61.9 53.6M53.4 55.7L50.8 64.0M53.4 55.7L62.0 63.5M62.0 63.5L69.4 62.5M62.0 63.5L56.8 68.1M62.0 63.5L63.1 70.3M56.8 68.1L63.1 70.3M56.8 68.1L52.9 77.1M56.8 68.1L60.7 75.7M60.7 75.7L66.4 76.0M60.7 75.7L56.8 83.0M60.7 75.7L63.1 83.6M66.4 -5.0L63.1 2.5M66.4 -5.0L69.6 0.7M63.1 2.5L69.6 0.7M63.1 2.5L61.0 9.6M63.1 2.5L65.2 8.9M65.2 8.9L76.7 9.6M65.2 8.9L61.0 15.0M65.2 8.9L73.2 14.0M61.0 15.0L73.2 14.0M61.0 15.0L61.6 22.9M61.0 15.0L67.2 20.1M67.2 20.1L75.5 20.4M67.2 20.1L64.4 28.0M67.2 20.1L69.3 28.0M64.4 28.0L69.3 28.0M64.4 28.0L61.4 35.1M64.4 28.0L67.9 36.6M67.9 36.6L76.8 36.3M67.9 36.6L62.1 39.4M67.9 36.6L72.3 43.5M62.1 39.4L72.3 43.5M62.1 39.4L59.9 48.8M62.1 39.4L66.3 49.1M66.3 49.1L74.0 46.8M66.3 49.1L61.9 53.6M66.3 49.1L70.9 54.0M61.9 53.6L70.9 54.0M61.9 53.6L62.0 63.5M61.9 53.6L69.4 62.5M69.4 62.5L73.6 61.4M69.4 62.5L63.1 70.3M69.4 62.5L71.8 68.5M63.1 70.3L71.8 68.5M63.1 70.3L60.7 75.7M63.1 70.3L66.4 76.0M66.4 76.0L74.1 76.8M66.4 76.0L63.1 83.6M66.4 76.0L69.6 81.7M63.1 83.6L69.6 81.7M74.1 -4.2L69.6 0.7M74.1 -4.2L81.5 0.8M69.6 0.7L81.5 0.8M69.6 0.7L65.2 8.9M69.6 0.7L76.7 9.6M76.7 9.6L80.7 5.7M76.7 9.6L73.2 14.0M76.7 9.6L80.9 12.5M73.2 14.0L80.9 12.5M73.2 14.0L67.2 20.1M73.2 14.0L75.5 20.4M75.5 20.4L84.0 21.6M75.5 20.4L69.3 28.0M75.5 20.4L78.0 29.3M69.3 28.0L78.0 29.3M69.3 28.0L67.9 36.6M69.3 28.0L76.8 36.3M76.8 36.3L80.4 33.2M76.8 36.3L72.3 43.5M76.8 36.3L78.8 39.4M72.3 43.5L78.8 39.4M72.3 43.5L66.3 49.1M72.3 43.5L74.0 46.8M74.0 46.8L84.6 47.1M74.0 46.8L70.9 54.0M74.0 46.8L77.2 53.0M70.9 54.0L77.2 53.0M70.9 54.0L69.4 62.5M70.9 54.0L73.6 61.4M73.6 61.4L83.6 61.6M73.6 61.4L71.8 68.5M73.6 61.4L79.7 69.2M71.8 68.5L79.7 69.2M71.8 68.5L66.4 76.0M71.8 68.5L74.1 76.8M74.1 76.8L84.5 77.3M74.1 76.8L69.6 81.7M74.1 76.8L81.5 81.8M69.6 81.7L81.5 81.8M69.6 81.7L65.2 89.9M69.6 81.7L76.7 90.7M84.5 -3.7L81.5 0.8M84.5 -3.7L86.6 1.3M81.5 0.8L86.6 1.3M81.5 0.8L76.7 9.6M81.5 0.8L80.7 5.7M80.7 5.7L92.9 7.6M80.7 5.7L80.9 12.5M80.7 5.7L86.8 14.9M80.9 12.5L86.8 14.9M80.9 12.5L75.5 20.4M80.9 12.5L84.0 21.6M84.0 21.6L89.1 21.3M84.0 21.6L78.0 29.3M84.0 21.6L87.5 29.3M78.0 29.3L87.5 29.3M78.0 29.3L76.8 36.3M78.0 29.3L80.4 33.2M80.4 33.2L88.6 33.9M80.4 33.2L78.8 39.4M80.4 33.2L84.7 42.9M78.8 39.4L84.7 42.9M78.8 39.4L74.0 46.8M78.8 39.4L84.6 47.1M84.6 47.1L91.7 46.2M84.6 47.1L77.2 53.0M84.6 47.1L89.3 57.1M77.2 53.0L89.3 57.1M77.2 53.0L73.6 61.4M77.2 53.0L83.6 61.6M83.6 61.6L91.5 62.3M83.6 61.6L79.7 69.2M83.6 61.6L85.0 66.4M79.7 69.2L85.0 66.4M79.7 69.2L74.1 76.8M79.7 69.2L84.5 77.3M84.5 77.3L90.8 73.3M84.5 77.3L81.5 81.8M84.5 77.3L86.6 82.3M81.5 81.8L86.6 82.3M81.5 81.8L76.7 90.7M81.5 81.8L80.7 86.7M90.8 -7.7L86.6 1.3M86.6 1.3L93.0 -0.2M86.6 1.3L80.7 5.7M86.6 1.3L92.9 7.6M86.8 14.9L84.0 21.6M87.5 29.3L80.4 33.2M88.6 33.9L84.7 42.9M84.7 42.9L97.2 43.7M84.7 42.9L84.6 47.1M84.7 42.9L91.7 46.2M89.3 57.1L83.6 61.6M91.5 62.3L85.0 66.4M85.0 66.4L96.0 68.1M85.0 66.4L84.5 77.3M85.0 66.4L90.8 73.3" stroke="#1c1c1c" stroke-width="0.48" fill="none" stroke-opacity=".72"/><path d="M0.8 1.3h.01M7.1 7.6h.01M1.0 14.9h.01M3.3 21.3h.01M1.7 29.3h.01M2.8 33.9h.01M-1.1 42.9h.01M5.9 46.2h.01M3.5 57.1h.01M5.7 62.3h.01M-0.8 66.4h.01M5.0 73.3h.01M7.2 -0.2h.01M10.3 7.6h.01M8.5 16.0h.01M12.8 21.9h.01M8.8 28.7h.01M12.5 33.8h.01M11.4 43.7h.01M14.5 49.2h.01M7.8 53.8h.01M11.6 59.9h.01M10.2 68.1h.01M14.5 74.8h.01M19.0 2.5h.01M17.9 6.5h.01M18.7 14.4h.01M23.0 20.8h.01M14.4 28.6h.01M21.9 33.7h.01M14.5 40.8h.01M22.9 49.4h.01M14.6 53.9h.01M18.4 59.8h.01M18.1 67.1h.01M20.8 75.1h.01M22.8 2.0h.01M26.4 8.4h.01M22.4 14.2h.01M26.8 20.2h.01M26.8 29.4h.01M27.3 36.5h.01M22.9 41.1h.01M30.1 48.9h.01M22.3 57.2h.01M26.8 60.7h.01M25.8 67.8h.01M27.3 73.4h.01M30.1 1.4h.01M34.8 8.2h.01M31.5 14.3h.01M38.5 21.2h.01M32.6 29.7h.01M34.5 33.2h.01M34.3 42.9h.01M34.8 46.9h.01M33.4 57.0h.01M34.5 63.8h.01M34.2 69.0h.01M35.7 73.5h.01M37.6 3.1h.01M42.6 8.7h.01M38.7 16.0h.01M44.4 20.3h.01M38.3 29.0h.01M41.7 33.6h.01M40.3 43.1h.01M44.5 47.3h.01M42.1 53.7h.01M41.4 60.8h.01M39.7 66.6h.01M42.2 74.7h.01M48.2 -0.6h.01M51.0 9.5h.01M50.3 15.2h.01M52.7 21.6h.01M45.9 25.9h.01M49.2 36.6h.01M48.8 43.6h.01M49.2 48.9h.01M47.7 56.1h.01M50.8 64.0h.01M45.6 68.8h.01M52.9 77.1h.01M56.8 1.9h.01M61.0 9.6h.01M54.8 15.3h.01M61.6 22.9h.01M55.2 29.3h.01M61.4 35.1h.01M56.2 41.0h.01M59.9 48.8h.01M53.4 55.7h.01M62.0 63.5h.01M56.8 68.1h.01M60.7 75.7h.01M63.1 2.5h.01M65.2 8.9h.01M61.0 15.0h.01M67.2 20.1h.01M64.4 28.0h.01M67.9 36.6h.01M62.1 39.4h.01M66.3 49.1h.01M61.9 53.6h.01M69.4 62.5h.01M63.1 70.3h.01M66.4 76.0h.01M69.6 0.7h.01M76.7 9.6h.01M73.2 14.0h.01M75.5 20.4h.01M69.3 28.0h.01M76.8 36.3h.01M72.3 43.5h.01M74.0 46.8h.01M70.9 54.0h.01M73.6 61.4h.01M71.8 68.5h.01M74.1 76.8h.01M81.5 0.8h.01M80.7 5.7h.01M80.9 12.5h.01M84.0 21.6h.01M78.0 29.3h.01M80.4 33.2h.01M78.8 39.4h.01M84.6 47.1h.01M77.2 53.0h.01M83.6 61.6h.01M79.7 69.2h.01M84.5 77.3h.01" stroke="#222" stroke-width="1.300" stroke-linecap="round" stroke-opacity=".7"/></pattern>
<linearGradient id="bg3" x1="0" y1="0" x2="0" y2="1"><stop offset="0" stop-color="#4d4d4d"/><stop offset=".35" stop-color="#6e6e6e"/><stop offset=".6" stop-color="#888888"/><stop offset="1" stop-color="#8f8f8f"/></linearGradient>
<radialGradient id="hd" cx="0.55" cy="0.45" r="0.6"><stop offset="0" stop-color="#fbfbfb"/><stop offset=".7" stop-color="#ececec"/><stop offset="1" stop-color="#c6c6c6"/></radialGradient>
<linearGradient id="lg1" x1="0" y1="0" x2="1" y2="0"><stop offset="0" stop-color="#dcdcdc"/><stop offset=".12" stop-color="#f7f7f7"/><stop offset=".85" stop-color="#f5f5f5"/><stop offset="1" stop-color="#d6d6d6"/></linearGradient>
<linearGradient id="sh" x1="0" y1="0" x2="1" y2="0"><stop offset="0" stop-color="#d0d0d0"/><stop offset=".3" stop-color="#f0f0f0"/><stop offset="1" stop-color="#f2f2f2"/></linearGradient>
<linearGradient id="arm" x1="0" y1="0" x2="1" y2="0.3"><stop offset="0" stop-color="#dadada"/><stop offset=".5" stop-color="#f6f6f6"/><stop offset="1" stop-color="#dedede"/></linearGradient>
</defs>
<rect x="313" y="69" width="353" height="589" fill="url(#bg3)"/>
<filter id="bl" x="-30%" y="-30%" width="160%" height="160%"><feGaussianBlur stdDeviation="1.300"/></filter><filter id="bl2" x="-30%" y="-30%" width="160%" height="160%"><feGaussianBlur stdDeviation="2.600"/></filter>
<linearGradient id="nk" x1="0" y1="0" x2="1" y2="0"><stop offset="0" stop-color="#c9c9c9"/><stop offset=".2" stop-color="#ececec"/><stop offset=".75" stop-color="#e9e9e9"/><stop offset="1" stop-color="#d0d0d0"/></linearGradient>
<path d="M454.400 168 C454.500 182 454 196 451 208 C449 214 446 217 443 219 L434 224 L560 224 L560 221 L521 219 C517 216 514 212 513 208 C511 196 510.500 182 510.500 168 Z" fill="url(#nk)"/>
<path d="M456 176 C466 190 498 190 509 176 L510 194 C498 200 466 200 455 194 Z" fill="#bdbdbd" filter="url(#bl2)"/>
<path d="M470 196 C474 206 480 216 488 224 L495 224 C488 214 483 205 480 196 Z" fill="#dadada" filter="url(#bl)"/>
<radialGradient id="hd2" cx="0.47" cy="0.42" r="0.62"><stop offset="0" stop-color="#fafafa"/><stop offset=".65" stop-color="#efefef"/><stop offset="1" stop-color="#cdcdcd"/></radialGradient>
<path d="M482 75.500 C462 75.500 447 90 446 112 C445.500 122 446 131 447 138 C443 135.500 439 138 439.500 145 C440 152 443 158 448.500 158.500 C450 164 452 168 454 171 C458 178 466 183.500 474 184.500 C479 185.300 485 185.300 490 184.500 C498 183.500 506 178 510 171 C512 168 514 164 515.500 158.500 C521 158 524 152 524.500 145 C525 138 521 135.500 517 138 C518 131 518.500 122 518 112 C517 90 502 75.500 482 75.500 Z" fill="url(#hd2)"/>
<path d="M441.500 141 C442 148 444 153 447 155 C445.500 150 445 145 445.500 140 Z M522.500 141 C522 148 520 153 517 155 C518.500 150 519 145 518.500 140 Z" fill="#c4c4c4"/>
<g filter="url(#bl)">
<path d="M453 119.500 C458 115.500 468 115.500 473 120 C468 124.500 458 124.500 453 119.500 Z" fill="#c2c2c2"/><path d="M487 120 C492 115.500 502 115.500 507 119.500 C502 124.500 492 124.500 487 120 Z" fill="#c2c2c2"/>
<path d="M470 137 C474 141.500 484 141.500 488.500 137 C486 143 473 143 470 137Z" fill="#a6a6a6"/>
<path d="M473 114 C472 124 471 130 470 135 L474 136 C475 128 476 120 477 114 Z" fill="#d2d2d2"/>
<path d="M466.500 152.500 C474 150 486 150 493 152.500 C486 156 474 156 466.500 152.500 Z" fill="#b4b4b4"/>
<path d="M469 160.500 C476 164 484 164 491 160.500 C484 167 476 167 469 160.500Z" fill="#c4c4c4"/>
<path d="M452 150 C454 162 458 170 464 176 C459 168 456 160 455 150Z" fill="#d0d0d0"/>
<path d="M512 150 C510 162 506 170 500 176 C505 168 508 160 509 150Z" fill="#cccccc"/>
</g>
<path d="M477 111 C476.500 122 475 130 473.500 135.500 C477 138.500 483 138.500 486 135.500 C485 128 484 120 484 111 Z" fill="#f8f8f8" filter="url(#bl)"/>
<path d="M467 152.800 C474 151.500 486 151.500 492.500 152.800" stroke="#a8a8a8" stroke-width=".8" fill="none"/>
<path d="M456 117 C460 114.500 466 114.500 471 117 M489 117 C494 114.500 500 114.500 505 117" stroke="#b8b8b8" stroke-width=".9" fill="none"/>
<path d="M399 499 C393 520 387 545 385 568 C384 600 383 630 383 660 L465.500 660 C468 620 474 580 481 553 C486 580 494 620 499 660 L578 660 C580 630 582 600 580 576 C584 550 590 525 592 500 Z" fill="url(#lg1)"/>
<path d="M465.500 660 C468 620 474 580 481 553 C486 580 494 620 499 660 Z" fill="#8a8a8a"/>
<path d="M452 528 C462 540 472 548 481 552 C492 548 505 540 516 530 C505 545 492 553 481 557 C470 552 460 542 452 528Z" fill="#c4c4c4" filter="url(#bl)"/>
<path d="M404 505 C412 525 420 548 428 570 C440 575 452 582 462 594 C458 570 450 545 436 516 Z" fill="#dedede" filter="url(#bl)"/>
<path d="M380 243 C370 250 365 256 363 262 C358 275 353 290 349 302 C342 320 334 336 328 347 C322 358 317 367 313 376 L313 535 C316 533 318 531 319 527.600 C328 514 336 500 343.600 485 C350 473 356 461 362 448 C367 436 372 424 375.600 411.600 C379 399 381 387 384.800 375 C388 365 393 356 397 347.500 L402 300 Z" fill="url(#arm)"/>
<path d="M434 221.500 C444 224 462 225 481 223 L560 223 L560 506 L474 511 L400 500 C402 480 403 460 403 442 C403 420 402 400 401.600 381 C401 370 399 357 397 347.500 L363 262 C366 254 372 248 380 243 C398 236 418 228 434 221.500 Z" fill="url(#sh)"/>
<linearGradient id="tv" x1="0" y1="0" x2="0" y2="1"><stop offset="0" stop-color="#000" stop-opacity="0"/><stop offset=".45" stop-color="#000" stop-opacity=".06"/><stop offset="1" stop-color="#000" stop-opacity=".17"/></linearGradient>
<path d="M434 221.500 C444 224 462 225 481 223 L560 223 L560 506 L474 511 L400 500 C402 480 403 460 403 442 C403 420 402 400 401.600 381 C401 370 399 357 397 347.500 L363 262 C366 254 372 248 380 243 C398 236 418 228 434 221.500 Z" fill="url(#tv)"/>
<path d="M481 223 L560 223 L560 505 L474 511 C475 470 478 400 479.600 353 Z" fill="#efecb2"/>
<path d="M397 347 C403 357 406 375 405 398 C404 382 402 364 397 350Z" fill="#b0b0b0"/>
<path d="M420 330 C440 336 460 336 478 332 C460 342 438 342 420 330Z" fill="#cfcfcf"/>
<clipPath id="cl"><path d="M380 243 C370 250 365 256 363 262 C358 275 353 290 349 302 C342 320 334 336 328 347 C322 358 317 367 313 376 L313 535 C316 533 318 531 319 527.600 C328 514 336 500 343.600 485 C350 473 356 461 362 448 C367 436 372 424 375.600 411.600 C379 399 381 387 384.800 375 C388 365 393 356 397 347.500 L402 300 Z"/><path d="M434 221.500 C444 224 462 225 481 223 L560 223 L560 506 L474 511 L400 500 C402 480 403 460 403 442 C403 420 402 400 401.600 381 C401 370 399 357 397 347.500 L363 262 C366 254 372 248 380 243 C398 236 418 228 434 221.500 Z"/></clipPath>
<rect x="313" y="215" width="250" height="330" fill="url(#mesh)" clip-path="url(#cl)"/>
<path d="M481 223 L479.600 353 L474 511 L560 505" fill="none" stroke="#f2ea18" stroke-width="1.400"/><path d="M481 223.500 H560" stroke="#f2ea18" stroke-width="1.200"/>
<path d="M481.500 330 V470" stroke="#7c7cc0" stroke-width=".6"/>
<path d="M410 402 l6 0 l1 6 l-1 6 l1 8 l-2 8 l-3 8 l-8 1 l-3 -8 l1 -10 l-1 -8 l3 -7 z" fill="#ee8e8e" opacity=".85"/>
<circle cx="424" cy="385" r="2.500" fill="#f4f4f4" opacity=".8"/><circle cx="437" cy="402" r="2.500" fill="#f4f4f4" opacity=".7"/>
<circle cx="522" cy="383" r="52" fill="none" stroke="#4a4af0" stroke-width=".9"/>
<path d="M478 383 H560" stroke="#ff2020" stroke-width="1.200"/><path d="M471.500 383 l7 -3.200 v6.400 z" fill="#e01010"/>
<path d="M479 378.500 L522 376.500 M479 388 L522 389.500" stroke="#20e020" stroke-width="1.200"/>
<path d="M521.500 330 V435" stroke="#f07070" stroke-width=".8"/><ellipse cx="520.500" cy="377" rx="2.500" ry="3.500" fill="#1010d0"/>
<path d="M523.300 330 V345 M523.300 425 V435" stroke="#20e020" stroke-width="1"/>
</svg>
<div style="left:320px;top:75.500px;width:14px;height:14px;background:rgba(120,120,120,.22);border:1px solid rgba(140,140,140,.28)"></div>
<div style="left:338.8px;top:75.500px;width:14px;height:14px;background:rgba(120,120,120,.22);border:1px solid rgba(140,140,140,.28)"></div>
<div style="left:356.8px;top:75.500px;width:14px;height:14px;background:rgba(120,120,120,.22);border:1px solid rgba(140,140,140,.28)"></div>
<div style="left:374.5px;top:75.500px;width:14px;height:14px;background:rgba(120,120,120,.22);border:1px solid rgba(140,140,140,.28)"></div>
<div style="left:392.3px;top:75.500px;width:14px;height:14px;background:rgba(120,120,120,.22);border:1px solid rgba(140,140,140,.28)"></div>
<div style="left:410.5px;top:75.500px;width:14px;height:14px;background:rgba(120,120,120,.22);border:1px solid rgba(140,140,140,.28)"></div>
<div style="left:428.8px;top:75.500px;width:14px;height:14px;background:rgba(120,120,120,.22);border:1px solid rgba(140,140,140,.28)"></div>
<div style="left:446.8px;top:75.500px;width:14px;height:14px;background:rgba(120,120,120,.22);border:1px solid rgba(140,140,140,.28)"></div>
<svg style="left:320px;top:75.500px" width="160" height="16" viewBox="319 75 160 16">
<path d="M321 84 l5 -5 l5 2 v6 l-5 3 l-5 -2 z" fill="#bdbdbd"/><path d="M326 79 l5 2 l-5 3 l-5 -2z" fill="#e4e4e4"/><path d="M326 86 h5 v3 h-5z" fill="#555"/>
<path d="M339 79 l3 -1.500 h6 l3 1.500 l-1.500 3.500 l-2 -1 v7 h-5 v-7 l-2 1 z" fill="#ececec"/>
<g fill="#e9a820"><circle cx="359" cy="80" r="1.800"/><circle cx="365" cy="78.500" r="1.800"/><circle cx="368" cy="83" r="1.800"/><circle cx="364" cy="87" r="1.800"/><circle cx="358.500" cy="86" r="1.800"/><circle cx="362" cy="83" r="1.500"/></g>
<circle cx="381" cy="79.500" r="2.800" fill="#f0f0f0"/><path d="M375.500 89 c0 -5 2 -6.500 5.500 -6.500 s5.500 1.500 5.500 6.500 z" fill="#f0f0f0"/>
<path d="M393 80 h9 l2 1.500 v7 h-11 z" fill="#f0f0f0"/><path d="M396 78 h8 v7 h-8z" fill="#e9a820"/>
<path d="M411 85 l4 -5 h7 l-2 6 l-5 2 z" fill="#e6e6e6"/><path d="M411 85 l4 3 l5 -2" stroke="#888" fill="none"/>
<circle cx="435" cy="80.500" r="4.200" fill="#f4b98a"/><path d="M430.500 89.500 c1 -3 3 -3.500 4.500 -3.500 s3.500 .5 4.500 3.500 z" fill="#f4b98a"/>
<circle cx="453" cy="82" r="5.500" fill="#e9a020"/><path d="M447.500 82 h11 M453 76.500 v11 M449 78.500 c3 2 5 2 8 0 M449 85.500 c3 -2 5 -2 8 0" stroke="#8a5a10" stroke-width=".7" fill="none"/>
<path d="M470.500 76 l4 4 h-2.500 v3 h-3 v-3 h-2.500 z M464.500 83 h12 v4.500 h-12 z" fill="#9a9a9a"/>
</svg>
<div style="left:672px;top:31px;width:366px;height:630px;background:#484848;"></div>
<div style="left:672px;top:31px;width:366px;height:14px;background:#383838;"></div>
<span class="t c " style="left:784.5px;width:120px;top:33.5px;transform:scaleX(0.86);">2D Pattern Window</span>
<svg style="left:889.5px;top:34.0px" width="9" height="9" viewBox="0 0 9 9"><rect width="9" height="9" rx="1" fill="#2b2b2b"/><path d="M2.800 3.700 h3.400 l-1.700 2.200 z" fill="#c8c8c8"/></svg>
<svg style="left:1028px;top:33.5px" width="9" height="8" viewBox="0 0 9 8"><rect x="0.800" y="2.500" width="5" height="4.200" fill="none" stroke="#aaaaaa" stroke-width="1.100"/><path d="M5.500 2.800 L7.800 .6" stroke="#aaaaaa" stroke-width="1.200"/></svg>
<div style="left:672px;top:45px;width:366px;height:22px;background:#494949"></div>
<svg style="left:741px;top:45px" width="296" height="23" viewBox="741 45 296 23">
<rect x="751.500" y="51" width="12" height="10" rx="2" fill="#a8a8a8"/><circle cx="757.500" cy="56" r="3" fill="none" stroke="#dedede" stroke-width="1.200"/>
<circle cx="781" cy="51" r="1.600" fill="#cfcfcf"/><path d="M776.500 53.5 h9 v1.800 h-3 v6.500 h-1.200 v-4 h-.8 v4 h-1.200 v-6.500 h-2.800 z" fill="#cfcfcf"/>
<path d="M795.5 49 l5 3.200 l-3.200 .8 l-1.800 2.600 z" fill="#d8d8d8"/><path d="M801 52.5 h8.500 v9 h-9.500 v-2.500 h6 v-2.500 h-3 v2 h-2 z" fill="#c4c4c4"/>
<path d="M819 49 l5 3.200 l-3.200 .8 l-1.800 2.600 z" fill="#d8d8d8"/><path d="M823 61 l3 -8 M826.500 61 l3 -8 M830 61 l3 -8 M823.500 59 h9 M824.500 56 h9 M825.600 53.2 h8.500" stroke="#c8c8c8" stroke-width=".9" fill="none"/>
<path d="M842.500 60 h11 v-2.500 c0 -3 -3 -5 -7 -4.500 v2 c-2 .3 -4 2 -4 5 z" fill="#7a7a7a"/>
<path d="M863.5 49 l5 3.200 l-3.200 .8 l-1.800 2.600 z" fill="#d8d8d8"/><path transform="translate(873,58) scale(0.8)" d="M-3 -5.500 L-6.500 -3.500 L-5 -.5 L-3.500 -1.200 L-3.500 5.500 L3.500 5.500 L3.500 -1.200 L5 -.5 L6.500 -3.500 L3 -5.500 C2 -4 -2 -4 -3 -5.500 Z" fill="#b4b4b4"/>
<path d="M886.5 49 l5 3.200 l-3.200 .8 l-1.800 2.600 z" fill="#d8d8d8"/><path d="M891 54 l4 5 l3 -6 l2 2 v6 h-9 z" fill="#d0d0d0"/><path d="M893 57 l3 3" stroke="#333" stroke-width="1"/>
<path d="M911.500 51 h2.200 v9.500 h-2.200 z M915 51 h2.200 v9.500 h-2.200 z M918.500 51 h2.200 l1 9.500 h-2.200 z" fill="#dadada"/>
<path d="M932 49 l5 3.200 l-3.200 .8 l-1.800 2.600 z" fill="#d8d8d8"/><path d="M936.500 61.5 L945.500 51.5" stroke="#e2e2e2" stroke-width="1.600"/>
<path d="M954.5 49 l5 3.200 l-3.200 .8 l-1.800 2.600 z" fill="#d8d8d8"/><path d="M963.500 50.5 v12" stroke="#c8c8c8" stroke-width="1"/><path d="M961 53 v9" stroke="#c8c8c8" stroke-width=".9" stroke-dasharray="1.500 1.500"/>
<path transform="translate(984,56.5) scale(0.95)" d="M-3 -5.500 L-6.500 -3.500 L-5 -.5 L-3.500 -1.200 L-3.500 5.500 L3.500 5.500 L3.500 -1.200 L5 -.5 L6.500 -3.500 L3 -5.500 C2 -4 -2 -4 -3 -5.500 Z" fill="#9a9a9a"/>
</svg>
<div style="left:672px;top:67px;width:366px;height:592px;background:#2e2e2e"></div>
<svg style="left:672.5px;top:68.5px" width="364" height="589.5" viewBox="672.5 68.5 364 589.5">
<rect x="672.5" y="68.5" width="364" height="589.5" fill="#d3d3d3"/>
<path d="M681.0 68.5V658.0M698.0 68.5V658.0M715.0 68.5V658.0M732.0 68.5V658.0M749.0 68.5V658.0M766.0 68.5V658.0M783.0 68.5V658.0M800.0 68.5V658.0M834.0 68.5V658.0M851.0 68.5V658.0M868.0 68.5V658.0M885.0 68.5V658.0M902.0 68.5V658.0M919.0 68.5V658.0M936.0 68.5V658.0M953.0 68.5V658.0M970.0 68.5V658.0M987.0 68.5V658.0M1004.0 68.5V658.0M1021.0 68.5V658.0M672.5 85.0H1036.5M672.5 102.0H1036.5M672.5 119.0H1036.5M672.5 136.0H1036.5M672.5 153.0H1036.5M672.5 170.0H1036.5M672.5 187.0H1036.5M672.5 204.0H1036.5M672.5 221.0H1036.5M672.5 238.0H1036.5M672.5 255.0H1036.5M672.5 272.0H1036.5M672.5 289.0H1036.5M672.5 306.0H1036.5M672.5 323.0H1036.5M672.5 340.0H1036.5M672.5 357.0H1036.5M672.5 374.0H1036.5M672.5 391.0H1036.5M672.5 408.0H1036.5M672.5 425.0H1036.5M672.5 442.0H1036.5M672.5 459.0H1036.5M672.5 476.0H1036.5M672.5 493.0H1036.5M672.5 510.0H1036.5M672.5 527.0H1036.5M672.5 544.0H1036.5M672.5 561.0H1036.5M672.5 578.0H1036.5M672.5 595.0H1036.5M672.5 612.0H1036.5M672.5 629.0H1036.5" stroke="#d9d9d9" stroke-width="1" fill="none"/>
<path d="M817.0 370.0 L830.0 372.0 L834.0 384.0 L833.0 398.0 L846.0 403.0 L866.0 408.0 L873.0 424.0 L885.0 451.7 L895.0 485.0 L897.5 500.0 L895.0 508.0 L891.0 511.7 L886.0 510.0 L884.0 503.0 L881.0 498.0 L880.0 485.0 L866.7 451.7 L849.0 427.0 L846.0 440.0 L843.0 460.0 L848.0 493.0 L851.5 517.0 L849.0 545.0 L845.7 575.0 L846.0 600.0 L844.0 629.0 L850.0 637.0 L856.0 644.0 L838.0 645.0 L835.0 638.0 L834.0 629.0 L828.0 600.0 L820.5 575.0 L818.8 545.0 L817.0 513.0 L815.2 545.0 L813.5 575.0 L806.0 600.0 L800.0 629.0 L799.0 638.0 L796.0 645.0 L778.0 644.0 L784.0 637.0 L790.0 629.0 L788.0 600.0 L788.3 575.0 L785.0 545.0 L782.5 517.0 L786.0 493.0 L791.0 460.0 L788.0 440.0 L785.0 427.0 L767.3 451.7 L754.0 485.0 L753.0 498.0 L750.0 503.0 L748.0 510.0 L743.0 511.7 L739.0 508.0 L736.5 500.0 L739.0 485.0 L749.0 451.7 L761.0 424.0 L768.0 408.0 L788.0 403.0 L801.0 398.0 L800.0 384.0 L804.0 372.0 Z" fill="#c3c3c3" stroke="#c3c3c3" stroke-width="1.500" stroke-linejoin="round"/>
<path d="M817 68.5V658.0" stroke="#8c8c8c" stroke-width="1"/>
<path d="M672.5 646H1036.5" stroke="#a0a0a0" stroke-width="1"/>
<path d="M700 312 C730 306 752 318 767 332 L760 419.5 L700 420 Z" fill="#fff" stroke="#74acdf" stroke-width="2.8"/>
<path d="M816.5 319 C806 318 799 312 797 303 L779 315 C780 328 787 338 787 346 C787 354 780 358 775.5 363 L775.5 417.5 L816.5 424 Z" fill="#fff" stroke="#74acdf" stroke-width="3"/>
<path d="M816.5 319 C827 318 834 312 836 303.5 L855 315 C854 328 848 338 848 346 C848 354 854 358 858.5 363 L858.5 417.5 L816.5 424 Z" fill="#fff" stroke="#74acdf" stroke-width="3"/>
<path d="M816.5 319 C806 318 799 312 797 303 L779 315 C780 328 787 338 787 346 C787 354 780 358 775.5 363 L775.5 417.5 L816.5 424 Z" fill="none" stroke="#5fd6f4" stroke-width="1.6"/>
<path d="M816.5 319 C827 318 834 312 836 303.5 L855 315 C854 328 848 338 848 346 C848 354 854 358 858.5 363 L858.5 417.5 L816.5 424 Z" fill="none" stroke="#f4ee22" stroke-width="1.6"/>
<path d="M816.5 319V424" stroke="#74acdf" stroke-width="2.600"/><path d="M816.5 319V424" stroke="#5fd6f4" stroke-width="1.200"/>
<path d="M868 332.5 C880 318 896 309 914 309 C934 309 946 322 960.5 332 L954 418.5 L948 420 L874.5 419 Z" fill="#fff" stroke="#74acdf" stroke-width="2.8"/>
<path d="M954 318.5 L973 307 C978 311 984 311.5 990.5 311.5 C997 311.5 1003 311 1008.5 307 L1027.5 318.5 C1022 330 1020 340 1024 350 C1027 358 1031 362 1034.5 365 L1033.5 420 L990.5 423.5 L948 420 L954 418.5 L960.5 332 C958 328 956 323 954 318.5 Z" fill="#fff" stroke="#74acdf" stroke-width="2.8"/>
<path d="M960.5 332 L954 418.5" stroke="#fff" stroke-width="3"/>
<path d="M960.5 332 L954 418.5" stroke="#333" stroke-width="0.7"/>
<path d="M990.5 311.5V423.5" stroke="#74acdf" stroke-width="2"/>
<circle cx="767" cy="332" r="1.7" fill="#1a1a1a"/>
<circle cx="760" cy="419" r="1.7" fill="#1a1a1a"/>
<circle cx="868" cy="332.5" r="1.7" fill="#1a1a1a"/>
<circle cx="914" cy="309" r="1.7" fill="#1a1a1a"/>
<circle cx="960.5" cy="332" r="1.7" fill="#1a1a1a"/>
<circle cx="954" cy="318.5" r="1.7" fill="#1a1a1a"/>
<circle cx="973" cy="307" r="1.7" fill="#1a1a1a"/>
<circle cx="990.5" cy="311.5" r="1.7" fill="#1a1a1a"/>
<circle cx="988.5" cy="311.5" r="1.7" fill="#1a1a1a"/>
<circle cx="1008.5" cy="307" r="1.7" fill="#1a1a1a"/>
<circle cx="1027.5" cy="318.5" r="1.7" fill="#1a1a1a"/>
<circle cx="1034.5" cy="365" r="1.7" fill="#1a1a1a"/>
<circle cx="1033.5" cy="420" r="1.7" fill="#1a1a1a"/>
<circle cx="990.5" cy="423.5" r="1.7" fill="#1a1a1a"/>
<circle cx="988.5" cy="423.5" r="1.7" fill="#1a1a1a"/>
<circle cx="948" cy="420" r="1.7" fill="#1a1a1a"/>
<circle cx="954" cy="418.5" r="1.7" fill="#1a1a1a"/>
<circle cx="914" cy="419" r="1.7" fill="#1a1a1a"/>
<circle cx="874.5" cy="419" r="1.7" fill="#1a1a1a"/>
<circle cx="797" cy="303" r="2.2" fill="#5fd6f4"/>
<circle cx="779" cy="315" r="2.2" fill="#5fd6f4"/>
<circle cx="816.5" cy="319" r="2.2" fill="#5fd6f4"/>
<circle cx="775.5" cy="363" r="2.2" fill="#5fd6f4"/>
<circle cx="775.5" cy="417.5" r="2.2" fill="#5fd6f4"/>
<circle cx="816.5" cy="424" r="2.2" fill="#5fd6f4"/>
<circle cx="836" cy="303.5" r="2.2" fill="#f4ee22"/>
<circle cx="855" cy="315" r="2.2" fill="#f4ee22"/>
<circle cx="858.5" cy="363" r="2.2" fill="#f4ee22"/>
<circle cx="858.5" cy="417.5" r="2.2" fill="#f4ee22"/>
<circle cx="797" cy="383" r="2" fill="#9a9a9a"/><circle cx="803.5" cy="389" r="2" fill="#9a9a9a"/><circle cx="833" cy="381.5" r="2" fill="#1a1ad8"/>
<g fill="#d8343a"><circle cx="780.0" cy="394.0" r="0.95"/><circle cx="782.3" cy="394.6" r="0.95"/><circle cx="786.6" cy="388.7" r="0.95"/><circle cx="776.2" cy="397.2" r="0.95"/><circle cx="780.4" cy="390.6" r="0.95"/><circle cx="792.9" cy="393.2" r="0.95"/><circle cx="790.2" cy="393.2" r="0.95"/><circle cx="786.9" cy="389.7" r="0.95"/><circle cx="786.8" cy="397.5" r="0.95"/><circle cx="784.9" cy="396.2" r="0.95"/><circle cx="787.4" cy="388.7" r="0.95"/><circle cx="788.9" cy="394.5" r="0.95"/><circle cx="781.1" cy="388.3" r="0.95"/><circle cx="790.7" cy="393.2" r="0.95"/><circle cx="788.2" cy="397.7" r="0.95"/><circle cx="788.1" cy="398.1" r="0.95"/><circle cx="782.7" cy="396.8" r="0.95"/><circle cx="783.6" cy="398.3" r="0.95"/><circle cx="790.9" cy="389.1" r="0.95"/><circle cx="778.3" cy="390.4" r="0.95"/><circle cx="792.4" cy="392.8" r="0.95"/><circle cx="786.7" cy="391.3" r="0.95"/><circle cx="784.6" cy="392.2" r="0.95"/><circle cx="782.0" cy="394.4" r="0.95"/><circle cx="785.9" cy="397.9" r="0.95"/><circle cx="787.6" cy="398.2" r="0.95"/><circle cx="790.6" cy="398.9" r="0.95"/><circle cx="787.4" cy="389.8" r="0.95"/><circle cx="790.6" cy="398.6" r="0.95"/><circle cx="791.4" cy="394.3" r="0.95"/><circle cx="788.1" cy="390.3" r="0.95"/><circle cx="790.1" cy="394.3" r="0.95"/><circle cx="780.8" cy="388.7" r="0.95"/><circle cx="790.5" cy="398.9" r="0.95"/><circle cx="1017.6" cy="395.4" r="0.95"/><circle cx="1019.9" cy="390.2" r="0.95"/><circle cx="1019.1" cy="395.2" r="0.95"/><circle cx="1023.1" cy="389.4" r="0.95"/><circle cx="1021.3" cy="389.4" r="0.95"/><circle cx="1022.0" cy="391.6" r="0.95"/><circle cx="1023.2" cy="396.8" r="0.95"/><circle cx="1020.5" cy="397.0" r="0.95"/><circle cx="1019.2" cy="389.6" r="0.95"/><circle cx="1021.2" cy="389.3" r="0.95"/><circle cx="1018.4" cy="392.3" r="0.95"/><circle cx="1021.3" cy="390.2" r="0.95"/><circle cx="1031.1" cy="398.8" r="0.95"/><circle cx="1031.9" cy="399.6" r="0.95"/><circle cx="1033.7" cy="394.4" r="0.95"/><circle cx="1032.4" cy="395.7" r="0.95"/><circle cx="1032.9" cy="396.4" r="0.95"/><circle cx="1032.7" cy="396.6" r="0.95"/><circle cx="1033.8" cy="395.6" r="0.95"/><circle cx="1032.3" cy="397.5" r="0.95"/></g>
<rect x="741" y="76" width="8" height="13" fill="#f2c21e"/>
<rect x="751.5" y="76" width="13" height="13" fill="#dcdcdc" stroke="#e4e4e4"/><path d="M754 80h8v2h-2v5h-4v-5h-2z" fill="#b9b9b9"/>
<path d="M776.5 77 l4 4 h-2.5 v3 h-3 v-3 h-2.500 z M770.500 84 h12 v4.500 h-12 z" fill="#9c9c9c"/>
</svg>
<div style="left:1037px;top:31px;width:3px;height:630px;background:#3a3a3a;"></div>
<div style="left:1040px;top:31px;width:236px;height:630px;background:#484848;"></div>
<div style="left:1040px;top:31px;width:236px;height:14px;background:#383838;"></div>
<span class="t c " style="left:1088.5px;width:120px;top:33.5px;transform:scaleX(0.86);">Fabric</span>
<svg style="left:1193.5px;top:34.0px" width="9" height="9" viewBox="0 0 9 9"><rect width="9" height="9" rx="1" fill="#2b2b2b"/><path d="M2.800 3.700 h3.400 l-1.700 2.200 z" fill="#c8c8c8"/></svg>
<svg style="left:1041px;top:32.5px" width="10" height="10" viewBox="0 0 10 10"><path d="M0.500 4 h2.500 v-2 l3 3 l-3 3 v-2 h-2.500 z" fill="#f2f2f2"/><rect x="7.200" y="0.500" width="1.500" height="9" fill="#242424"/></svg>
<svg style="left:1256px;top:33.5px" width="9" height="8" viewBox="0 0 9 8"><rect x="0.800" y="2.500" width="5" height="4.200" fill="none" stroke="#aaaaaa" stroke-width="1.100"/><path d="M5.500 2.800 L7.800 .6" stroke="#aaaaaa" stroke-width="1.200"/></svg>
<svg style="left:1267.5px;top:34.5px" width="6" height="6" viewBox="0 0 6 6"><path d="M.7 .7 L5.300 5.300 M5.300 .7 L.7 5.300" stroke="#b4b4b4" stroke-width="1.200"/></svg>
<div class="btn" style="left:1047px;top:52px;width:49px;"></div>
<span class="t c " style="left:1037.0px;width:69px;top:56.5px;transform:scaleX(0.86);color:#e0e0e0;">Add</span>
<div class="btn" style="left:1102px;top:52px;width:50px;"></div>
<span class="t c " style="left:1092.0px;width:70px;top:56.5px;transform:scaleX(0.86);color:#6c6c6c;">Copy</span>
<div class="btn" style="left:1158px;top:52px;width:49px;"></div>
<span class="t c " style="left:1148.0px;width:69px;top:56.5px;transform:scaleX(0.86);color:#e0e0e0;">Assign</span>
<div class="btn" style="left:1213px;top:52px;width:57px;"></div>
<span class="t c " style="left:1203.0px;width:77px;top:56.5px;transform:scaleX(0.86);color:#e0e0e0;">Delete Unused</span>
<div style="left:1047px;top:77px;width:223px;height:207px;background:#353535;"></div>
<div style="left:1083px;top:89px;width:24px;height:24px;background:#ffffff;"></div>
<div style="left:1083px;top:126px;width:24px;height:24px;background:#ffffff;"></div>
<span class="t o" style="left:1113px;top:97.0px;transform:scaleX(0.86);transform-origin:0 50%;">FABRIC 1</span>
<span class="t " style="left:1113px;top:134.0px;transform:scaleX(0.86);transform-origin:0 50%;">FABRIC 2</span>
<div style="left:1055px;top:119.5px;width:205px;height:1px;background:#3f3f3f;"></div>
<div style="left:1055px;top:156.5px;width:205px;height:1px;background:#3f3f3f;"></div>
<svg style="left:1062px;top:132px" width="10" height="9" viewBox="0 0 10 9"><path d="M1.5 4.5 L4 7 L8.5 1.5" fill="none" stroke="#f2c81e" stroke-width="1.8"/></svg>
<div style="left:1245px;top:96.5px;width:8px;height:8px;background:#9a9a9a;border-radius:1px"></div>
<div style="left:1247px;top:96.5px;width:4px;height:3px;background:#444;"></div>
<div style="left:1247px;top:101.5px;width:4px;height:3px;background:#5a5a5a;"></div>
<div style="left:1245px;top:133px;width:8px;height:8px;background:#9a9a9a;border-radius:1px"></div>
<div style="left:1247px;top:133px;width:4px;height:3px;background:#444;"></div>
<div style="left:1247px;top:138px;width:4px;height:3px;background:#5a5a5a;"></div>
<div style="left:1040px;top:285px;width:236px;height:10px;background:#484848;"></div>
<div style="left:1040px;top:294.5px;width:236px;height:13.5px;background:#383838;"></div>
<span class="t c " style="left:1088.0px;width:120px;top:296.5px;transform:scaleX(0.86);">Property Editor</span>
<svg style="left:1193.5px;top:297.0px" width="9" height="9" viewBox="0 0 9 9"><rect width="9" height="9" rx="1" fill="#2b2b2b"/><path d="M2.800 3.700 h3.400 l-1.700 2.200 z" fill="#c8c8c8"/></svg>
<svg style="left:1041px;top:296px" width="10" height="10" viewBox="0 0 10 10"><path d="M0.500 4 h2.500 v-2 l3 3 l-3 3 v-2 h-2.500 z" fill="#f2f2f2"/><rect x="7.200" y="0.500" width="1.500" height="9" fill="#242424"/></svg>
<svg style="left:1256px;top:297px" width="9" height="8" viewBox="0 0 9 8"><rect x="0.800" y="2.500" width="5" height="4.200" fill="none" stroke="#aaaaaa" stroke-width="1.100"/><path d="M5.500 2.800 L7.800 .6" stroke="#aaaaaa" stroke-width="1.200"/></svg>
<svg style="left:1267.5px;top:298px" width="6" height="6" viewBox="0 0 6 6"><path d="M.7 .7 L5.300 5.300 M5.300 .7 L.7 5.300" stroke="#b4b4b4" stroke-width="1.200"/></svg>
<div style="left:1254.5px;top:315px;width:11px;height:338px;background:#2b2b2b;"></div>
<div style="left:1255.5px;top:316px;width:9px;height:11px;background:#3a3a3a;"></div>
<div style="left:1255.5px;top:327px;width:9px;height:175px;background:#3d3d3d;"></div>
<div style="left:1255.5px;top:642px;width:9px;height:10px;background:#3a3a3a;"></div>
<span class="t " style="left:1257.5px;top:316.0px;transform:scaleX(0.86);transform-origin:0 50%;font-size:6px;color:#aaa">▴</span>
<span class="t " style="left:1257.5px;top:642.0px;transform:scaleX(0.86);transform-origin:0 50%;font-size:6px;color:#aaa">▾</span>
<svg style="left:1048px;top:321.5px" width="7" height="5"><polygon points="0.5,0.5 6.5,0.5 3.5,4" fill="#8a8a8a"/></svg>
<span class="t o" style="left:1059px;top:318.0px;transform:scaleX(0.86);transform-origin:0 50%;">Information</span>
<div style="left:1056px;top:331px;width:191px;height:1px;background:#515151;"></div>
<span class="t " style="left:1062px;top:334.0px;transform:scaleX(0.86);transform-origin:0 50%;">Name</span>
<div class="in" style="left:1157px;top:333.5px;width:83px"></div>
<span class="t " style="left:1161px;top:334.3px;transform:scaleX(0.86);transform-origin:0 50%;color:#e0e0e0">Pattern2D_468820</span>
<div style="left:1047px;top:347.5px;width:200px;height:1px;background:#515151;"></div>
<svg style="left:1048px;top:353.5px" width="7" height="5"><polygon points="0.5,0.5 6.5,0.5 3.5,4" fill="#8a8a8a"/></svg>
<span class="t o" style="left:1059px;top:350.0px;transform:scaleX(0.86);transform-origin:0 50%;">Selected Line</span>
<div style="left:1056px;top:363px;width:191px;height:1px;background:#515151;"></div>
<span class="t " style="left:1062px;top:366.0px;transform:scaleX(0.86);transform-origin:0 50%;">2D Line Length</span>
<div class="in" style="left:1178.5px;top:365.5px;width:61.5px"></div>
<span class="t g" style="left:1182.5px;top:366.3px;transform:scaleX(0.86);transform-origin:0 50%;color:#6f6f6f">1765.5mm</span>
<div style="left:1056px;top:379.5px;width:191px;height:1px;background:#515151;"></div>
<span class="t " style="left:1067.5px;top:382.0px;transform:scaleX(0.86);transform-origin:0 50%;">+ Symmetric Line Length</span>
<div class="in" style="left:1178.5px;top:381.5px;width:61.5px"></div>
<span class="t g" style="left:1182.5px;top:382.3px;transform:scaleX(0.86);transform-origin:0 50%;color:#6f6f6f">3531.0mm</span>
<div style="left:1056px;top:395.5px;width:191px;height:1px;background:#515151;"></div>
<span class="t " style="left:1062px;top:398.0px;transform:scaleX(0.86);transform-origin:0 50%;">3D Line Length</span>
<div class="in" style="left:1178.5px;top:397.5px;width:61.5px"></div>
<span class="t g" style="left:1182.5px;top:398.3px;transform:scaleX(0.86);transform-origin:0 50%;color:#6f6f6f">1832.9mm</span>
<div style="left:1056px;top:411.5px;width:191px;height:1px;background:#515151;"></div>
<span class="t " style="left:1067.5px;top:414.0px;transform:scaleX(0.86);transform-origin:0 50%;">+ Symmetric Line Length</span>
<div class="in" style="left:1178.5px;top:413.5px;width:61.5px"></div>
<span class="t g" style="left:1182.5px;top:414.3px;transform:scaleX(0.86);transform-origin:0 50%;color:#6f6f6f">3665.9mm</span>
<div style="left:1056px;top:427.5px;width:191px;height:1px;background:#515151;"></div>
<span class="t " style="left:1062px;top:430.0px;transform:scaleX(0.86);transform-origin:0 50%;">Elastic</span>
<div class="cb" style="left:1232.5px;top:431.0px;"></div>
<div style="left:1056px;top:443.5px;width:191px;height:1px;background:#515151;"></div>
<span class="t " style="left:1062px;top:446.0px;transform:scaleX(0.86);transform-origin:0 50%;">Seam Taping</span>
<div class="cb" style="left:1232.5px;top:447.0px;"></div>
<div style="left:1056px;top:459.5px;width:191px;height:1px;background:#515151;"></div>
<svg style="left:1056.5px;top:465.5px" width="7" height="5"><polygon points="0.5,0.5 6.5,0.5 3.5,4" fill="#8a8a8a"/></svg>
<span class="t " style="left:1067px;top:462.0px;transform:scaleX(0.86);transform-origin:0 50%;">Curved Side Geometry</span>
<div style="left:1232.5px;top:463.0px;width:9px;height:9px;border-radius:2px;background:#f2c81e"></div><svg style="left:1233.5px;top:464.0px" width="7" height="7" viewBox="0 0 7 7"><path d="M1 3.5 L2.8 5.5 L6 1" fill="none" stroke="#333" stroke-width="1.2"/></svg>
<div style="left:1063px;top:475.5px;width:184px;height:1px;background:#515151;"></div>
<span class="t " style="left:1070.5px;top:484.0px;transform:scaleX(0.86);transform-origin:0 50%;">Curvature (%)</span>
<div class="in" style="left:1178.5px;top:477.5px;width:61.5px"></div>
<span class="t " style="left:1182.5px;top:478.3px;transform:scaleX(0.86);transform-origin:0 50%;color:#e0e0e0">100</span>
<div style="left:1181px;top:495px;width:57px;height:2px;background:#f2d21e;"></div>
<div style="left:1235.5px;top:492px;width:3.5px;height:7px;background:#e8e8e8;border-radius:1.500px;box-shadow:0 0 0 .5px #444"></div>
<div style="left:1063px;top:503.5px;width:184px;height:1px;background:#515151;"></div>
<span class="t " style="left:1070.5px;top:506.5px;transform:scaleX(0.86);transform-origin:0 50%;">Double Sided</span>
<div class="cb" style="left:1232.5px;top:507.5px;border-color:#666;"></div>
<div style="left:1047px;top:520px;width:200px;height:1px;background:#515151;"></div>
<svg style="left:1048px;top:526px" width="7" height="5"><polygon points="0.5,0.5 6.5,0.5 3.5,4" fill="#8a8a8a"/></svg>
<span class="t o" style="left:1059px;top:522.5px;transform:scaleX(0.86);transform-origin:0 50%;">Simulation Properties</span>
<div style="left:1056px;top:536px;width:191px;height:1px;background:#515151;"></div>
<span class="t " style="left:1062px;top:538.5px;transform:scaleX(0.86);transform-origin:0 50%;">Particle Distance (mm)</span>
<div class="in" style="left:1178.5px;top:538.0px;width:61.5px"></div>
<span class="t " style="left:1182.5px;top:538.8px;transform:scaleX(0.86);transform-origin:0 50%;color:#e0e0e0">20.0</span>
<div style="left:1056px;top:552px;width:191px;height:1px;background:#515151;"></div>
<span class="t " style="left:1062px;top:554.5px;transform:scaleX(0.86);transform-origin:0 50%;">Layer</span>
<div class="in" style="left:1178.5px;top:554.0px;width:61.5px"></div>
<span class="t " style="left:1182.5px;top:554.8px;transform:scaleX(0.86);transform-origin:0 50%;color:#e0e0e0">0</span>
<div style="left:1056px;top:568px;width:191px;height:1px;background:#515151;"></div>
<span class="t " style="left:1062px;top:570.5px;transform:scaleX(0.86);transform-origin:0 50%;">Shrinkage Weft (%)</span>
<div class="in" style="left:1178.5px;top:570.0px;width:61.5px"></div>
<span class="t " style="left:1182.5px;top:570.8px;transform:scaleX(0.86);transform-origin:0 50%;color:#e0e0e0">100.00</span>
<div style="left:1056px;top:584px;width:191px;height:1px;background:#515151;"></div>
<span class="t " style="left:1062px;top:586.5px;transform:scaleX(0.86);transform-origin:0 50%;">Shrinkage Warp (%)</span>
<div class="in" style="left:1178.5px;top:586.0px;width:61.5px"></div>
<span class="t " style="left:1182.5px;top:586.8px;transform:scaleX(0.86);transform-origin:0 50%;color:#e0e0e0">100.00</span>
<div style="left:1056px;top:600px;width:191px;height:1px;background:#515151;"></div>
<span class="t " style="left:1062px;top:602.5px;transform:scaleX(0.86);transform-origin:0 50%;">Add'l Thickness - Collision (mm)</span>
<div class="in" style="left:1184px;top:602.0px;width:56px"></div>
<span class="t " style="left:1188px;top:602.8px;transform:scaleX(0.86);transform-origin:0 50%;color:#e0e0e0">2.5</span>
<div style="left:1056px;top:616px;width:191px;height:1px;background:#515151;"></div>
<span class="t " style="left:1062px;top:618.5px;transform:scaleX(0.86);transform-origin:0 50%;">Add'l Thickness - Rendering (mm)</span>
<div class="in" style="left:1187px;top:618.0px;width:53px"></div>
<span class="t " style="left:1191px;top:618.8px;transform:scaleX(0.86);transform-origin:0 50%;color:#e0e0e0">0.0</span>
<div style="left:1056px;top:632px;width:191px;height:1px;background:#515151;"></div>
<svg style="left:1057.5px;top:643px" width="5" height="7"><polygon points="0.5,0.5 4,3.5 0.5,6.5" fill="#8a8a8a"/></svg>
<span class="t " style="left:1067px;top:640.5px;transform:scaleX(0.86);transform-origin:0 50%;">Pressure</span>
<div class="in" style="left:1178.5px;top:634.0px;width:61.5px"></div>
<span class="t " style="left:1182.5px;top:634.8px;transform:scaleX(0.86);transform-origin:0 50%;color:#e0e0e0">0</span>
<div style="left:1181px;top:650.5px;width:30px;height:2px;background:#f2d21e;"></div>
<div style="left:1211px;top:651px;width:27px;height:1px;background:#333;"></div>
<div style="left:1209.5px;top:648.5px;width:3.5px;height:6px;background:#e8e8e8;border-radius:1.500px;box-shadow:0 0 0 .5px #444"></div>
<svg style="left:1178px;top:664px" width="96" height="17" viewBox="1178 664 96 17" fill="none" stroke="#8a8a8a" stroke-width="1.100">
<rect x="1180" y="667" width="11" height="10"/><path d="M1180 669.200 h11"/>
<rect x="1200" y="667" width="4.500" height="10"/><rect x="1206.500" y="667" width="4.500" height="10"/>
<rect x="1219.500" y="667" width="4.500" height="10"/><rect x="1226" y="667" width="4.500" height="4"/><rect x="1226" y="673" width="4.500" height="4"/>
<rect x="1238.500" y="667" width="4.500" height="4"/><rect x="1245" y="667" width="4.500" height="4"/><rect x="1238.500" y="673" width="4.500" height="4"/><rect x="1245" y="673" width="4.500" height="4"/>
<rect x="1257.500" y="667" width="11" height="10"/><path d="M1266 669.500 l-3.500 0 l0 3.500 M1262.500 673 a2.500 2.500 0 1 0 3 -2"/>
</svg>
<svg style="left:1050px;top:645px" width="226" height="70" viewBox="1050 645 226 70">
<g fill="#ffffff" opacity=".17"><rect x="-5" y="-4.500" width="10" height="9" transform="translate(1104.5,688.5) rotate(18)"/><rect x="-5" y="-4.500" width="10" height="9" transform="translate(1096.8,699.0) rotate(54)"/><rect x="-5" y="-4.500" width="10" height="9" transform="translate(1084.5,703.0) rotate(90)"/><rect x="-5" y="-4.500" width="10" height="9" transform="translate(1072.2,699.0) rotate(126)"/><rect x="-5" y="-4.500" width="10" height="9" transform="translate(1064.5,688.5) rotate(162)"/><rect x="-5" y="-4.500" width="10" height="9" transform="translate(1064.5,675.5) rotate(198)"/><rect x="-5" y="-4.500" width="10" height="9" transform="translate(1104.5,675.5) rotate(342)"/>
<path d="M1064.0 676 a21.500 21.500 0 1 0 40.500 -4 l-9 2.500 a12 12 0 1 1 -22.500 2.500 z"/>
<path d="M1102 651 C1090 659 1080 668 1079 677 C1084 683 1096 682 1101 674 C1096 677 1088 676 1089 670 C1090 663 1098 656 1102 651 Z"/></g>
<text x="1125" y="678" font-family="Liberation Sans,sans-serif" font-weight="bold" font-size="10" fill="#fff" fill-opacity=".17" transform="rotate(-90 1125 678)" textLength="22" lengthAdjust="spacingAndGlyphs">THE</text>
<text x="1130" y="678" font-family="Liberation Sans,sans-serif" font-weight="bold" font-size="31" fill="#fff" fill-opacity=".17" textLength="135" lengthAdjust="spacingAndGlyphs">GNOMON</text>
<text x="1117" y="703.500" font-family="Liberation Sans,sans-serif" font-weight="bold" font-size="28" fill="#fff" fill-opacity=".15" textLength="148" lengthAdjust="spacingAndGlyphs">WORKSHOP</text>
</svg>
<div style="left:525px;top:0px;width:216.5px;height:575.5px;background:#383838;box-shadow:1px 1px 3px rgba(0,0,0,.5)"></div>
<span class="t " style="left:530.5px;top:5.0px;transform:scaleX(.97);transform-origin:0 50%;color:#747474;transform:scaleX(.87)">Pattern Options</span>
<div style="left:530px;top:18px;width:205px;height:1px;background:#3f3f3f;"></div>
<span class="t " style="left:537px;top:21.5px;transform:scaleX(.97);transform-origin:0 50%;color:#6d6d6d">Pattern</span>
<span class="t " style="left:548px;top:36.0px;transform:scaleX(.97);transform-origin:0 50%;color:#e6e6e6;-webkit-text-stroke:.15px #e6e6e6">Copy</span>
<span class="t " style="left:700.5px;top:36.0px;transform:scaleX(.97);transform-origin:0 50%;color:#e6e6e6;-webkit-text-stroke:.15px #e6e6e6">Ctrl+C</span>
<span class="t " style="left:548px;top:50.5px;transform:scaleX(.97);transform-origin:0 50%;color:#e6e6e6;-webkit-text-stroke:.15px #e6e6e6">Paste</span>
<span class="t " style="left:700.5px;top:50.5px;transform:scaleX(.97);transform-origin:0 50%;color:#e6e6e6;-webkit-text-stroke:.15px #e6e6e6">Ctrl+V</span>
<span class="t " style="left:548px;top:65.2px;transform:scaleX(.97);transform-origin:0 50%;color:#e6e6e6;-webkit-text-stroke:.15px #e6e6e6">Mirror Paste</span>
<span class="t " style="left:700.5px;top:65.2px;transform:scaleX(.97);transform-origin:0 50%;color:#e6e6e6;-webkit-text-stroke:.15px #e6e6e6">Ctrl+R</span>
<div style="left:530px;top:78.0px;width:205px;height:1px;background:#3f3f3f;"></div>
<span class="t " style="left:548px;top:81.2px;transform:scaleX(.97);transform-origin:0 50%;color:#e6e6e6;-webkit-text-stroke:.15px #e6e6e6">Deactivate (Pattern Only)</span>
<span class="t " style="left:700.5px;top:81.2px;transform:scaleX(.97);transform-origin:0 50%;color:#e6e6e6;-webkit-text-stroke:.15px #e6e6e6">Ctrl+J</span>
<span class="t " style="left:548px;top:96.0px;transform:scaleX(.97);transform-origin:0 50%;color:#e6e6e6;-webkit-text-stroke:.15px #e6e6e6">Deactivate (Pattern &amp; Sewing)</span>
<span class="t " style="left:548px;top:110.6px;transform:scaleX(.97);transform-origin:0 50%;color:#e6e6e6;-webkit-text-stroke:.15px #e6e6e6">Freeze</span>
<span class="t " style="left:700.5px;top:110.6px;transform:scaleX(.97);transform-origin:0 50%;color:#e6e6e6;-webkit-text-stroke:.15px #e6e6e6">Ctrl+K</span>
<span class="t " style="left:548px;top:125.2px;transform:scaleX(.97);transform-origin:0 50%;color:#e6e6e6;-webkit-text-stroke:.15px #e6e6e6">Strengthen</span>
<span class="t " style="left:700.5px;top:125.2px;transform:scaleX(.97);transform-origin:0 50%;color:#e6e6e6;-webkit-text-stroke:.15px #e6e6e6">Ctrl+H</span>
<span class="t " style="left:548px;top:140.0px;transform:scaleX(.97);transform-origin:0 50%;color:#e6e6e6;-webkit-text-stroke:.15px #e6e6e6">Solidify</span>
<div style="left:530px;top:153.0px;width:205px;height:1px;background:#3f3f3f;"></div>
<span class="t o" style="left:548px;top:156.0px;transform:scaleX(.97);transform-origin:0 50%;">Mesh Style</span>
<svg style="left:729px;top:158px" width="4" height="6"><polygon points="0,0 3.5,3 0,6" fill="#e9a21d"/></svg>
<span class="t " style="left:548px;top:170.7px;transform:scaleX(.97);transform-origin:0 50%;color:#e6e6e6;-webkit-text-stroke:.15px #e6e6e6">Remeshing to Retopology (Selected)</span>
<div style="left:530px;top:183.5px;width:205px;height:1px;background:#3f3f3f;"></div>
<span class="t " style="left:548px;top:186.5px;transform:scaleX(.97);transform-origin:0 50%;color:#e6e6e6;-webkit-text-stroke:.15px #e6e6e6">Flip Normal</span>
<div style="left:530px;top:199.0px;width:205px;height:1px;background:#3f3f3f;"></div>
<span class="t " style="left:537px;top:202.5px;transform:scaleX(.97);transform-origin:0 50%;color:#e6e6e6;-webkit-text-stroke:.15px #e6e6e6">Remove Steam</span>
<svg style="left:729px;top:204.5px" width="4" height="6"><polygon points="0,0 3.5,3 0,6" fill="#d8d8d8"/></svg>
<span class="t " style="left:537px;top:217.2px;transform:scaleX(.97);transform-origin:0 50%;color:#e6e6e6;-webkit-text-stroke:.15px #e6e6e6">Pin</span>
<svg style="left:729px;top:219.2px" width="4" height="6"><polygon points="0,0 3.5,3 0,6" fill="#d8d8d8"/></svg>
<span class="t " style="left:537px;top:231.8px;transform:scaleX(.97);transform-origin:0 50%;color:#e6e6e6;-webkit-text-stroke:.15px #e6e6e6">Subdivision</span>
<svg style="left:729px;top:233.8px" width="4" height="6"><polygon points="0,0 3.5,3 0,6" fill="#d8d8d8"/></svg>
<span class="t " style="left:537px;top:246.5px;transform:scaleX(.97);transform-origin:0 50%;color:#e6e6e6;-webkit-text-stroke:.15px #e6e6e6">Partial Freeze</span>
<svg style="left:729px;top:248.5px" width="4" height="6"><polygon points="0,0 3.5,3 0,6" fill="#d8d8d8"/></svg>
<span class="t " style="left:537px;top:261.2px;transform:scaleX(.97);transform-origin:0 50%;color:#e6e6e6;-webkit-text-stroke:.15px #e6e6e6">Partial Solidify</span>
<svg style="left:729px;top:263.2px" width="4" height="6"><polygon points="0,0 3.5,3 0,6" fill="#d8d8d8"/></svg>
<span class="t " style="left:537px;top:276.0px;transform:scaleX(.97);transform-origin:0 50%;color:#e6e6e6;-webkit-text-stroke:.15px #e6e6e6">Partial Strengthen</span>
<svg style="left:729px;top:278px" width="4" height="6"><polygon points="0,0 3.5,3 0,6" fill="#d8d8d8"/></svg>
<div style="left:530px;top:289.0px;width:205px;height:1px;background:#3f3f3f;"></div>
<span class="t " style="left:537px;top:292.0px;transform:scaleX(.97);transform-origin:0 50%;color:#5f5f5f">Arrangement</span>
<span class="t " style="left:548px;top:306.6px;transform:scaleX(.97);transform-origin:0 50%;color:#e6e6e6;-webkit-text-stroke:.15px #e6e6e6">Reset 2D Arrangement (Selected)</span>
<span class="t " style="left:548px;top:321.2px;transform:scaleX(.97);transform-origin:0 50%;color:#e6e6e6;-webkit-text-stroke:.15px #e6e6e6">Reset 3D Arrangement (Selected)</span>
<span class="t " style="left:700.5px;top:321.2px;transform:scaleX(.97);transform-origin:0 50%;color:#e6e6e6;-webkit-text-stroke:.15px #e6e6e6">Ctrl+F</span>
<span class="t " style="left:548px;top:336.0px;transform:scaleX(.97);transform-origin:0 50%;color:#e6e6e6;-webkit-text-stroke:.15px #e6e6e6">Symmetric Arrangement</span>
<span class="t " style="left:548px;top:350.6px;transform:scaleX(.97);transform-origin:0 50%;color:#e6e6e6;-webkit-text-stroke:.15px #e6e6e6">Smart Arrangement</span>
<span class="t " style="left:548px;top:365.2px;transform:scaleX(.97);transform-origin:0 50%;color:#e6e6e6;-webkit-text-stroke:.15px #e6e6e6">Move to Ground Center</span>
<span class="t " style="left:548px;top:380.0px;transform:scaleX(.97);transform-origin:0 50%;color:#e6e6e6;-webkit-text-stroke:.15px #e6e6e6">Flip Horizontally</span>
<span class="t " style="left:700.5px;top:380.0px;transform:scaleX(.97);transform-origin:0 50%;color:#e6e6e6;-webkit-text-stroke:.15px #e6e6e6">Ctrl+G</span>
<span class="t " style="left:548px;top:394.6px;transform:scaleX(.97);transform-origin:0 50%;color:#e6e6e6;-webkit-text-stroke:.15px #e6e6e6">Flip Vertically</span>
<span class="t " style="left:548px;top:409.2px;transform:scaleX(.97);transform-origin:0 50%;color:#e6e6e6;-webkit-text-stroke:.15px #e6e6e6">Reverse-Arrange</span>
<svg style="left:729px;top:411.2px" width="4" height="6"><polygon points="0,0 3.5,3 0,6" fill="#d8d8d8"/></svg>
<span class="t " style="left:548px;top:424.0px;transform:scaleX(.97);transform-origin:0 50%;color:#6a6a6a">Flip Wrap Direction</span>
<div style="left:530px;top:437.0px;width:205px;height:1px;background:#3f3f3f;"></div>
<span class="t " style="left:548px;top:439.8px;transform:scaleX(.97);transform-origin:0 50%;color:#e6e6e6;-webkit-text-stroke:.15px #e6e6e6">Superimpose (Over)</span>
<span class="t " style="left:700.5px;top:439.8px;transform:scaleX(.97);transform-origin:0 50%;color:#e6e6e6;-webkit-text-stroke:.15px #e6e6e6">Ctrl+[</span>
<span class="t " style="left:548px;top:454.5px;transform:scaleX(.97);transform-origin:0 50%;color:#e6e6e6;-webkit-text-stroke:.15px #e6e6e6">Superimpose (Under)</span>
<span class="t " style="left:700.5px;top:454.5px;transform:scaleX(.97);transform-origin:0 50%;color:#e6e6e6;-webkit-text-stroke:.15px #e6e6e6">Ctrl+]</span>
<span class="t " style="left:548px;top:469.2px;transform:scaleX(.97);transform-origin:0 50%;color:#e6e6e6;-webkit-text-stroke:.15px #e6e6e6">Superimpose (Side)</span>
<div style="left:530px;top:482.0px;width:205px;height:1px;background:#3f3f3f;"></div>
<span class="t " style="left:537px;top:485.2px;transform:scaleX(.97);transform-origin:0 50%;color:#e6e6e6;-webkit-text-stroke:.15px #e6e6e6">Hide 3D Pattern</span>
<span class="t " style="left:700.5px;top:485.2px;transform:scaleX(.97);transform-origin:0 50%;color:#e6e6e6;-webkit-text-stroke:.15px #e6e6e6">Shift+Q</span>
<span class="t " style="left:537px;top:500.0px;transform:scaleX(.97);transform-origin:0 50%;color:#e6e6e6;-webkit-text-stroke:.15px #e6e6e6">Hide All 3D Patterns</span>
<span class="t " style="left:700.5px;top:500.0px;transform:scaleX(.97);transform-origin:0 50%;color:#e6e6e6;-webkit-text-stroke:.15px #e6e6e6">Shift+C</span>
<span class="t " style="left:537px;top:514.6px;transform:scaleX(.97);transform-origin:0 50%;color:#e6e6e6;-webkit-text-stroke:.15px #e6e6e6">Refresh Textures</span>
<span class="t " style="left:700.5px;top:514.6px;transform:scaleX(.97);transform-origin:0 50%;color:#e6e6e6;-webkit-text-stroke:.15px #e6e6e6">F5</span>
<div style="left:530px;top:527.5px;width:205px;height:1px;background:#3f3f3f;"></div>
<span class="t " style="left:537px;top:530.5px;transform:scaleX(.97);transform-origin:0 50%;color:#e6e6e6;-webkit-text-stroke:.15px #e6e6e6">Focus Zoom</span>
<span class="t " style="left:700.5px;top:530.5px;transform:scaleX(.97);transform-origin:0 50%;color:#e6e6e6;-webkit-text-stroke:.15px #e6e6e6">F</span>
<span class="t " style="left:537px;top:545.2px;transform:scaleX(.97);transform-origin:0 50%;color:#e6e6e6;-webkit-text-stroke:.15px #e6e6e6">Zoom Extents All</span>
<div style="left:530px;top:558.0px;width:205px;height:1px;background:#3f3f3f;"></div>
<span class="t " style="left:537px;top:561.0px;transform:scaleX(.97);transform-origin:0 50%;color:#e6e6e6;-webkit-text-stroke:.15px #e6e6e6">Export to USD Layer</span>
<div style="left:741.5px;top:151.5px;width:100px;height:47.5px;background:#383838;box-shadow:1px 1px 3px rgba(0,0,0,.5)"></div>
<span class="t " style="left:750px;top:156.0px;transform:scaleX(.97);transform-origin:0 50%;color:#e6e6e6;-webkit-text-stroke:.15px #e6e6e6">Triangle</span>
<span class="t " style="left:750px;top:170.7px;transform:scaleX(.97);transform-origin:0 50%;color:#e6e6e6;-webkit-text-stroke:.15px #e6e6e6">Quad (Optimized)</span>
<span class="t " style="left:750px;top:185.3px;transform:scaleX(.97);transform-origin:0 50%;color:#e6e6e6;-webkit-text-stroke:.15px #e6e6e6">Quad (Grid)</span>
<svg style="left:740px;top:154px" width="22" height="30" viewBox="0 0 22 30"><path d="M2 2 L2 23 L7 18.5 L11 27.5 L15 25.5 L11 17 L18 17 Z" fill="#fff" stroke="#222" stroke-width="1.2" stroke-linejoin="round"/></svg>
</body></html>
